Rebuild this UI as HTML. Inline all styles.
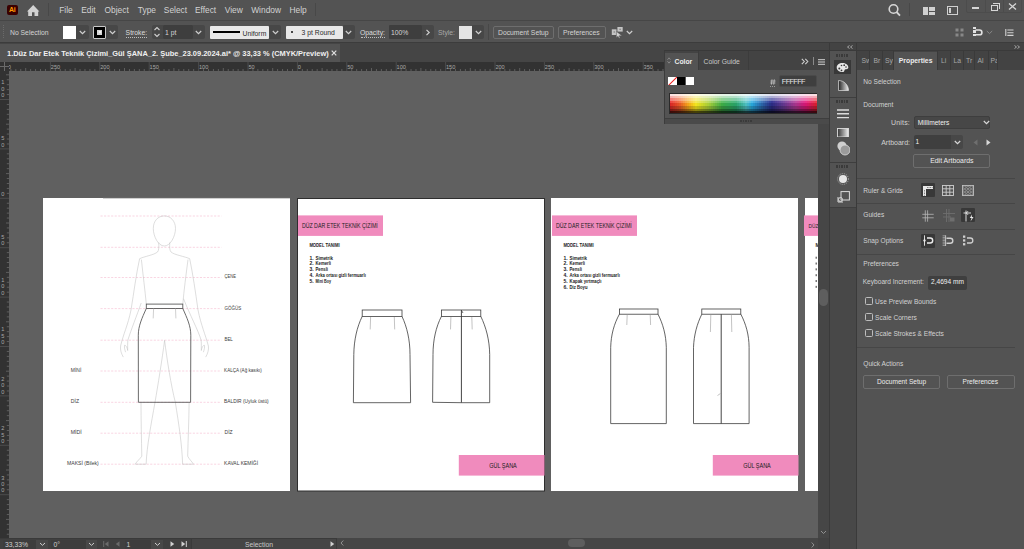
<!DOCTYPE html>
<html><head><meta charset="utf-8">
<style>
*{margin:0;padding:0;box-sizing:border-box}
html,body{width:1024px;height:549px;overflow:hidden;background:#535353;font-family:"Liberation Sans",sans-serif;color:#d6d6d6}
.a{position:absolute}
.t{position:absolute;white-space:pre;line-height:1}
#menubar{left:0;top:0;width:1024px;height:21px;background:#535353;border-bottom:1px solid #464646}
#ctrl{left:0;top:21px;width:1024px;height:22px;background:#535353;border-bottom:1px solid #3c3c3c}
#tabbar{left:0;top:43px;width:829px;height:19px;background:#454545}
#tab{left:0;top:44px;width:340px;height:18px;background:#535353}
#hruler{left:0;top:62px;width:818px;height:9px;background:#323232}
#vruler{left:0;top:62px;width:9px;height:476px;background:#323232}
#canvas{left:9px;top:71px;width:809px;height:467px;background:#606060;overflow:hidden}
.ab{position:absolute;top:127px;height:293px;background:#fff}
.pink{position:absolute;background:#f08bbd}
#vscroll{left:818px;top:71px;width:11px;height:467px;background:#464646}
#status{left:0;top:538px;width:818px;height:11px;background:#404040}
#iconcol{left:829px;top:43px;width:28px;height:506px;background:#484848}
#props{left:857px;top:43px;width:167px;height:506px;background:#535353}
.btn{position:absolute;border:1px solid #6e6e6e;border-radius:2px;background:#535353}
.inp{position:absolute;background:#3f3f3f;border-radius:1px}
.mi{top:5.7px;font-size:8.4px;color:#d2d2d2;margin-left:-0.8px}
.ct{font-size:6.8px;color:#d4d4d4}
.pt{font-size:6.8px}
.pp{font-size:6.6px;color:#d2d2d2}
.ptab{top:51px;width:1px;height:19px;background:#3a3a3a}
.pdiv{left:857px;width:158px;height:1px;background:#464646}
.cb{left:865.3px;width:8px;height:8px;border:1px solid #bdbdbd;border-radius:1.5px}
.grip{width:13px;height:2.5px;background:repeating-linear-gradient(to right,#3a3a3a 0 1.6px,transparent 1.6px 2.6px)}
.st{font-size:6.8px;color:#d0d0d0}
.dd{position:absolute;background:#474747}
</style></head><body>
<!-- MENU BAR -->
<div id="menubar" class="a"></div>
<div class="a" style="left:7px;top:5px;width:11px;height:10px;background:#3a0000;border-radius:2px"></div>
<div class="t" style="left:9px;top:6px;font-size:7px;font-weight:bold;color:#ff9a00;letter-spacing:-0.3px">Ai</div>
<svg class="a" style="left:27px;top:5px" width="13" height="11" viewBox="0 0 13 11"><path d="M6.2 0 L12.4 6.5 L11.2 6.5 L11.2 11 L7.5 11 L7.5 7.2 L5 7.2 L5 11 L1.2 11 L1.2 6.5 L0 6.5 Z" fill="#d2d2d2"/></svg>
<div class="a" style="left:48px;top:3px;width:1px;height:13px;background:#484848"></div>
<div class="t mi" style="left:60px">File</div>
<div class="t mi" style="left:82px">Edit</div>
<div class="t mi" style="left:105.3px">Object</div>
<div class="t mi" style="left:138.6px">Type</div>
<div class="t mi" style="left:164.6px">Select</div>
<div class="t mi" style="left:195.7px">Effect</div>
<div class="t mi" style="left:225.5px">View</div>
<div class="t mi" style="left:252px">Window</div>
<div class="t mi" style="left:290.3px">Help</div>
<div class="a" style="left:315px;top:3px;width:1px;height:13px;background:#484848"></div>
<svg class="a" style="left:887px;top:3px" width="16" height="15" viewBox="0 0 16 15"><circle cx="6.5" cy="6" r="4.3" fill="none" stroke="#d6d6d6" stroke-width="1.6"/><path d="M9.5 9 L13 12.6" stroke="#d6d6d6" stroke-width="1.8"/></svg>
<div class="a" style="left:909px;top:3px;width:1px;height:13px;background:#484848"></div>
<div class="a" style="left:923px;top:7px;width:5px;height:8px;background:#d0d0d0"></div>
<div class="a" style="left:929px;top:7px;width:6px;height:3.5px;background:#d0d0d0"></div>
<div class="a" style="left:929px;top:11.5px;width:6px;height:3.5px;background:#d0d0d0"></div>
<div class="a" style="left:947px;top:6px;width:11px;height:9px;border:1.3px solid #d0d0d0"></div>
<div class="a" style="left:949px;top:8px;width:2px;height:5px;background:#d0d0d0"></div>
<div class="a" style="left:966px;top:-1px;width:56px;height:14px;border:1px solid #4c4c4c;border-radius:0 0 2px 2px"></div>
<div class="a" style="left:985px;top:0px;width:1px;height:13px;background:#4c4c4c"></div>
<div class="a" style="left:1003px;top:0px;width:1px;height:13px;background:#4c4c4c"></div>
<div class="a" style="left:972px;top:7px;width:7px;height:1.5px;background:#d6d6d6"></div>
<div class="a" style="left:991px;top:5px;width:7px;height:6px;border:1.2px solid #d6d6d6"></div>
<div class="a" style="left:993px;top:3px;width:6.5px;height:5.5px;border-top:1.2px solid #d6d6d6;border-right:1.2px solid #d6d6d6"></div>
<svg class="a" style="left:1008px;top:3px" width="9" height="7" viewBox="0 0 9 7"><path d="M1 0.5 L8 6.5 M8 0.5 L1 6.5" stroke="#d6d6d6" stroke-width="1.3"/></svg>
<!-- CONTROL BAR -->
<div id="ctrl" class="a"></div>
<div class="a" style="left:3px;top:25px;width:1px;height:13px;border-left:1px dotted #6a6a6a"></div>
<div class="t ct" style="left:10px;top:29.6px">No Selection</div>
<div class="a" style="left:63px;top:26px;width:13px;height:12.5px;background:#fff"></div>
<div class="dd" style="left:76px;top:25px;width:12.5px;height:14px;border-radius:0 2px 2px 0"></div>
<svg class="a" style="left:78.8px;top:30px" width="7" height="5" viewBox="0 0 7 5"><path d="M0.8 1 L3.5 3.6 L6.2 1" fill="none" stroke="#cfcfcf" stroke-width="1.2"/></svg>
<div class="a" style="left:93px;top:26px;width:13px;height:12.5px;background:#000;border:1px solid #c8c8c8;border-radius:1px"></div>
<div class="a" style="left:96.8px;top:29.5px;width:5.5px;height:5.5px;background:#d8d8d8"></div>
<div class="a" style="left:98.5px;top:31.2px;width:2px;height:2px;background:#fff;border-radius:1px"></div>
<div class="dd" style="left:106px;top:25px;width:11.5px;height:14px;border-radius:0 2px 2px 0"></div>
<svg class="a" style="left:108.5px;top:30px" width="7" height="5" viewBox="0 0 7 5"><path d="M0.8 1 L3.5 3.6 L6.2 1" fill="none" stroke="#cfcfcf" stroke-width="1.2"/></svg>
<div class="t ct" style="left:125.6px;top:29.6px;color:#dcdcdc">Stroke:</div>
<div class="a" style="left:126px;top:37px;width:21px;height:1px;border-top:1px dotted #bdbdbd"></div>
<div class="dd" style="left:151.5px;top:25px;width:11px;height:14px;border-radius:2px 0 0 2px"></div>
<svg class="a" style="left:153px;top:26px" width="8" height="12" viewBox="0 0 8 12"><path d="M1.5 4 L4 1.5 L6.5 4 M1.5 8 L4 10.5 L6.5 8" fill="none" stroke="#d0d0d0" stroke-width="1.1"/></svg>
<div class="inp" style="left:162.5px;top:25px;width:30px;height:14px;background:#3e3e3e"></div>
<div class="t ct" style="left:165px;top:29.6px">1 pt</div>
<div class="dd" style="left:192.5px;top:25px;width:12px;height:14px;border-radius:0 2px 2px 0"></div>
<svg class="a" style="left:195px;top:30px" width="7" height="5" viewBox="0 0 7 5"><path d="M0.8 1 L3.5 3.6 L6.2 1" fill="none" stroke="#cfcfcf" stroke-width="1.2"/></svg>
<div class="a" style="left:209.5px;top:25.5px;width:59.5px;height:13px;background:#e8e8e8;border-radius:1px"></div>
<div class="a" style="left:213px;top:31px;width:27px;height:2px;background:#000"></div>
<div class="t ct" style="left:242.5px;top:30.5px;color:#2a2a2a">Uniform</div>
<div class="dd" style="left:269px;top:25px;width:11.5px;height:14px;border-radius:0 2px 2px 0"></div>
<svg class="a" style="left:271.5px;top:30px" width="7" height="5" viewBox="0 0 7 5"><path d="M0.8 1 L3.5 3.6 L6.2 1" fill="none" stroke="#cfcfcf" stroke-width="1.2"/></svg>
<div class="a" style="left:285.5px;top:25.5px;width:57px;height:13px;background:#e8e8e8;border-radius:1px"></div>
<div class="a" style="left:291px;top:31px;width:2px;height:2px;background:#111;border-radius:1px"></div>
<div class="t ct" style="left:301.5px;top:29.6px;color:#2a2a2a">3 pt Round</div>
<div class="dd" style="left:342.5px;top:25px;width:12px;height:14px;border-radius:0 2px 2px 0"></div>
<svg class="a" style="left:345px;top:30px" width="7" height="5" viewBox="0 0 7 5"><path d="M0.8 1 L3.5 3.6 L6.2 1" fill="none" stroke="#cfcfcf" stroke-width="1.2"/></svg>
<div class="t ct" style="left:360px;top:29.6px;color:#dcdcdc">Opacity:</div>
<div class="a" style="left:360.5px;top:37px;width:24px;height:1px;border-top:1px dotted #bdbdbd"></div>
<div class="inp" style="left:388.5px;top:25px;width:33.5px;height:14px;background:#3e3e3e"></div>
<div class="t ct" style="left:391px;top:29.6px">100%</div>
<div class="dd" style="left:422px;top:25px;width:12px;height:14px;border-radius:0 2px 2px 0"></div>
<svg class="a" style="left:425px;top:29px" width="6" height="7" viewBox="0 0 6 7"><path d="M1.5 0.8 L4.2 3.5 L1.5 6.2" fill="none" stroke="#cfcfcf" stroke-width="1.2"/></svg>
<div class="t ct" style="left:438px;top:29.6px;color:#a8a8a8">Style:</div>
<div class="a" style="left:458.8px;top:26px;width:13px;height:12.5px;background:#e4e4e4"></div>
<div class="dd" style="left:472px;top:25px;width:12px;height:14px;border-radius:0 2px 2px 0"></div>
<svg class="a" style="left:474.5px;top:30px" width="7" height="5" viewBox="0 0 7 5"><path d="M0.8 1 L3.5 3.6 L6.2 1" fill="none" stroke="#cfcfcf" stroke-width="1.2"/></svg>
<div class="a" style="left:487.5px;top:24px;width:1px;height:16px;background:#484848"></div>
<div class="btn" style="left:492.5px;top:25.5px;width:61.5px;height:13px"></div>
<div class="t ct" style="left:498px;top:29.6px">Document Setup</div>
<div class="btn" style="left:557.5px;top:25.5px;width:48px;height:13px"></div>
<div class="t ct" style="left:563px;top:29.6px">Preferences</div>
<svg class="a" style="left:611px;top:26px" width="13" height="13" viewBox="0 0 13 13"><rect x="0.8" y="3.3" width="4.7" height="5.7" fill="#c4c4c4"/><rect x="2.6" y="5.4" width="1.2" height="1.2" fill="#707070"/><rect x="6.4" y="1" width="5.3" height="4.6" fill="#c4c4c4"/><rect x="8.5" y="2.7" width="1.2" height="1.2" fill="#707070"/><path d="M5.4 5.4 L5.4 11.6 L7 10.2 L8.2 12.2 L9 11.8 L8 9.8 L10.9 9.7 Z" fill="#d0d0d0" stroke="#535353" stroke-width="0.4"/></svg>
<svg class="a" style="left:626px;top:30px" width="7" height="5" viewBox="0 0 7 5"><path d="M0.8 1 L3.5 3.6 L6.2 1" fill="none" stroke="#cfcfcf" stroke-width="1.2"/></svg>
<svg class="a" style="left:955px;top:27.5px" width="9" height="9" viewBox="0 0 9 9"><rect x="0.5" y="0.5" width="3" height="3" fill="#888"/><rect x="5.5" y="0.5" width="3" height="3" fill="#888"/><rect x="0.5" y="5.5" width="3" height="3" fill="#888"/><rect x="5.5" y="5.5" width="3" height="3" fill="#888"/></svg>
<div class="a" style="left:972.5px;top:27.2px;width:3px;height:10px;background:repeating-linear-gradient(#e0e0e0 0 2.2px,transparent 2.2px 3.4px)"></div>
<svg class="a" style="left:975px;top:28.5px" width="8" height="7" viewBox="0 0 8 7"><path d="M0.5 1 L4.5 1 A2.4 2.4 0 0 1 4.5 5.8 L0.5 5.8" fill="none" stroke="#e0e0e0" stroke-width="1.6"/></svg>
<svg class="a" style="left:985.5px;top:30px" width="7" height="5" viewBox="0 0 7 5"><path d="M0.8 1 L3.5 3.6 L6.2 1" fill="none" stroke="#8a8a8a" stroke-width="1"/></svg>
<svg class="a" style="left:1004.5px;top:28.5px" width="9" height="7.5" viewBox="0 0 9 7.5"><path d="M0.8 0 L0.8 7.5 M2.3 1 L8.5 1 M2.3 3.7 L8.5 3.7 M2.3 6.4 L8.5 6.4" stroke="#d4d4d4" stroke-width="1.1"/></svg>
<!-- TAB BAR -->
<div id="tabbar" class="a"></div>
<div id="tab" class="a"></div>
<div class="t" style="left:7px;top:49.9px;font-size:7.44px;font-weight:bold;color:#f0f0f0">1.Düz Dar Etek Teknik Çizimi_Gül ŞANA_2. Şube_23.09.2024.ai* @ 33,33 % (CMYK/Preview)</div>
<svg class="a" style="left:330.5px;top:50px" width="6" height="6" viewBox="0 0 6 6"><path d="M0.7 0.7 L5.3 5.3 M5.3 0.7 L0.7 5.3" stroke="#e0e0e0" stroke-width="1.2"/></svg>

<!-- RULERS -->
<div id="hruler" class="a"></div>
<div id="vruler" class="a"></div>
<svg class="a" style="left:9px;top:62px" width="809" height="9" viewBox="0 0 809 9"><g font-family="Liberation Sans" font-size="5.6" fill="#a8a8a8"><text x="-7.60" y="6.9">300</text><text x="41.80" y="6.9">250</text><text x="91.20" y="6.9">200</text><text x="140.60" y="6.9">150</text><text x="190.00" y="6.9">100</text><text x="239.40" y="6.9">50</text><text x="288.80" y="6.9">0</text><text x="338.20" y="6.9">50</text><text x="387.60" y="6.9">100</text><text x="437.00" y="6.9">150</text><text x="486.40" y="6.9">200</text><text x="535.80" y="6.9">250</text><text x="585.20" y="6.9">300</text><text x="634.60" y="6.9">350</text><text x="684.00" y="6.9">400</text><text x="733.40" y="6.9">450</text><text x="782.80" y="6.9">500</text></g><line x1="1.88" y1="7" x2="1.88" y2="9" stroke="#6a6a6a" stroke-width="0.8"/><line x1="6.82" y1="7" x2="6.82" y2="9" stroke="#6a6a6a" stroke-width="0.8"/><line x1="11.76" y1="7" x2="11.76" y2="9" stroke="#6a6a6a" stroke-width="0.8"/><line x1="16.70" y1="6" x2="16.70" y2="9" stroke="#6a6a6a" stroke-width="0.8"/><line x1="21.64" y1="7" x2="21.64" y2="9" stroke="#6a6a6a" stroke-width="0.8"/><line x1="26.58" y1="7" x2="26.58" y2="9" stroke="#6a6a6a" stroke-width="0.8"/><line x1="31.52" y1="7" x2="31.52" y2="9" stroke="#6a6a6a" stroke-width="0.8"/><line x1="36.46" y1="7" x2="36.46" y2="9" stroke="#6a6a6a" stroke-width="0.8"/><line x1="41.40" y1="0" x2="41.40" y2="9" stroke="#4c4c4c" stroke-width="1"/><line x1="46.34" y1="7" x2="46.34" y2="9" stroke="#6a6a6a" stroke-width="0.8"/><line x1="51.28" y1="7" x2="51.28" y2="9" stroke="#6a6a6a" stroke-width="0.8"/><line x1="56.22" y1="7" x2="56.22" y2="9" stroke="#6a6a6a" stroke-width="0.8"/><line x1="61.16" y1="7" x2="61.16" y2="9" stroke="#6a6a6a" stroke-width="0.8"/><line x1="66.10" y1="6" x2="66.10" y2="9" stroke="#6a6a6a" stroke-width="0.8"/><line x1="71.04" y1="7" x2="71.04" y2="9" stroke="#6a6a6a" stroke-width="0.8"/><line x1="75.98" y1="7" x2="75.98" y2="9" stroke="#6a6a6a" stroke-width="0.8"/><line x1="80.92" y1="7" x2="80.92" y2="9" stroke="#6a6a6a" stroke-width="0.8"/><line x1="85.86" y1="7" x2="85.86" y2="9" stroke="#6a6a6a" stroke-width="0.8"/><line x1="90.80" y1="0" x2="90.80" y2="9" stroke="#4c4c4c" stroke-width="1"/><line x1="95.74" y1="7" x2="95.74" y2="9" stroke="#6a6a6a" stroke-width="0.8"/><line x1="100.68" y1="7" x2="100.68" y2="9" stroke="#6a6a6a" stroke-width="0.8"/><line x1="105.62" y1="7" x2="105.62" y2="9" stroke="#6a6a6a" stroke-width="0.8"/><line x1="110.56" y1="7" x2="110.56" y2="9" stroke="#6a6a6a" stroke-width="0.8"/><line x1="115.50" y1="6" x2="115.50" y2="9" stroke="#6a6a6a" stroke-width="0.8"/><line x1="120.44" y1="7" x2="120.44" y2="9" stroke="#6a6a6a" stroke-width="0.8"/><line x1="125.38" y1="7" x2="125.38" y2="9" stroke="#6a6a6a" stroke-width="0.8"/><line x1="130.32" y1="7" x2="130.32" y2="9" stroke="#6a6a6a" stroke-width="0.8"/><line x1="135.26" y1="7" x2="135.26" y2="9" stroke="#6a6a6a" stroke-width="0.8"/><line x1="140.20" y1="0" x2="140.20" y2="9" stroke="#4c4c4c" stroke-width="1"/><line x1="145.14" y1="7" x2="145.14" y2="9" stroke="#6a6a6a" stroke-width="0.8"/><line x1="150.08" y1="7" x2="150.08" y2="9" stroke="#6a6a6a" stroke-width="0.8"/><line x1="155.02" y1="7" x2="155.02" y2="9" stroke="#6a6a6a" stroke-width="0.8"/><line x1="159.96" y1="7" x2="159.96" y2="9" stroke="#6a6a6a" stroke-width="0.8"/><line x1="164.90" y1="6" x2="164.90" y2="9" stroke="#6a6a6a" stroke-width="0.8"/><line x1="169.84" y1="7" x2="169.84" y2="9" stroke="#6a6a6a" stroke-width="0.8"/><line x1="174.78" y1="7" x2="174.78" y2="9" stroke="#6a6a6a" stroke-width="0.8"/><line x1="179.72" y1="7" x2="179.72" y2="9" stroke="#6a6a6a" stroke-width="0.8"/><line x1="184.66" y1="7" x2="184.66" y2="9" stroke="#6a6a6a" stroke-width="0.8"/><line x1="189.60" y1="0" x2="189.60" y2="9" stroke="#4c4c4c" stroke-width="1"/><line x1="194.54" y1="7" x2="194.54" y2="9" stroke="#6a6a6a" stroke-width="0.8"/><line x1="199.48" y1="7" x2="199.48" y2="9" stroke="#6a6a6a" stroke-width="0.8"/><line x1="204.42" y1="7" x2="204.42" y2="9" stroke="#6a6a6a" stroke-width="0.8"/><line x1="209.36" y1="7" x2="209.36" y2="9" stroke="#6a6a6a" stroke-width="0.8"/><line x1="214.30" y1="6" x2="214.30" y2="9" stroke="#6a6a6a" stroke-width="0.8"/><line x1="219.24" y1="7" x2="219.24" y2="9" stroke="#6a6a6a" stroke-width="0.8"/><line x1="224.18" y1="7" x2="224.18" y2="9" stroke="#6a6a6a" stroke-width="0.8"/><line x1="229.12" y1="7" x2="229.12" y2="9" stroke="#6a6a6a" stroke-width="0.8"/><line x1="234.06" y1="7" x2="234.06" y2="9" stroke="#6a6a6a" stroke-width="0.8"/><line x1="239.00" y1="0" x2="239.00" y2="9" stroke="#4c4c4c" stroke-width="1"/><line x1="243.94" y1="7" x2="243.94" y2="9" stroke="#6a6a6a" stroke-width="0.8"/><line x1="248.88" y1="7" x2="248.88" y2="9" stroke="#6a6a6a" stroke-width="0.8"/><line x1="253.82" y1="7" x2="253.82" y2="9" stroke="#6a6a6a" stroke-width="0.8"/><line x1="258.76" y1="7" x2="258.76" y2="9" stroke="#6a6a6a" stroke-width="0.8"/><line x1="263.70" y1="6" x2="263.70" y2="9" stroke="#6a6a6a" stroke-width="0.8"/><line x1="268.64" y1="7" x2="268.64" y2="9" stroke="#6a6a6a" stroke-width="0.8"/><line x1="273.58" y1="7" x2="273.58" y2="9" stroke="#6a6a6a" stroke-width="0.8"/><line x1="278.52" y1="7" x2="278.52" y2="9" stroke="#6a6a6a" stroke-width="0.8"/><line x1="283.46" y1="7" x2="283.46" y2="9" stroke="#6a6a6a" stroke-width="0.8"/><line x1="288.40" y1="0" x2="288.40" y2="9" stroke="#4c4c4c" stroke-width="1"/><line x1="293.34" y1="7" x2="293.34" y2="9" stroke="#6a6a6a" stroke-width="0.8"/><line x1="298.28" y1="7" x2="298.28" y2="9" stroke="#6a6a6a" stroke-width="0.8"/><line x1="303.22" y1="7" x2="303.22" y2="9" stroke="#6a6a6a" stroke-width="0.8"/><line x1="308.16" y1="7" x2="308.16" y2="9" stroke="#6a6a6a" stroke-width="0.8"/><line x1="313.10" y1="6" x2="313.10" y2="9" stroke="#6a6a6a" stroke-width="0.8"/><line x1="318.04" y1="7" x2="318.04" y2="9" stroke="#6a6a6a" stroke-width="0.8"/><line x1="322.98" y1="7" x2="322.98" y2="9" stroke="#6a6a6a" stroke-width="0.8"/><line x1="327.92" y1="7" x2="327.92" y2="9" stroke="#6a6a6a" stroke-width="0.8"/><line x1="332.86" y1="7" x2="332.86" y2="9" stroke="#6a6a6a" stroke-width="0.8"/><line x1="337.80" y1="0" x2="337.80" y2="9" stroke="#4c4c4c" stroke-width="1"/><line x1="342.74" y1="7" x2="342.74" y2="9" stroke="#6a6a6a" stroke-width="0.8"/><line x1="347.68" y1="7" x2="347.68" y2="9" stroke="#6a6a6a" stroke-width="0.8"/><line x1="352.62" y1="7" x2="352.62" y2="9" stroke="#6a6a6a" stroke-width="0.8"/><line x1="357.56" y1="7" x2="357.56" y2="9" stroke="#6a6a6a" stroke-width="0.8"/><line x1="362.50" y1="6" x2="362.50" y2="9" stroke="#6a6a6a" stroke-width="0.8"/><line x1="367.44" y1="7" x2="367.44" y2="9" stroke="#6a6a6a" stroke-width="0.8"/><line x1="372.38" y1="7" x2="372.38" y2="9" stroke="#6a6a6a" stroke-width="0.8"/><line x1="377.32" y1="7" x2="377.32" y2="9" stroke="#6a6a6a" stroke-width="0.8"/><line x1="382.26" y1="7" x2="382.26" y2="9" stroke="#6a6a6a" stroke-width="0.8"/><line x1="387.20" y1="0" x2="387.20" y2="9" stroke="#4c4c4c" stroke-width="1"/><line x1="392.14" y1="7" x2="392.14" y2="9" stroke="#6a6a6a" stroke-width="0.8"/><line x1="397.08" y1="7" x2="397.08" y2="9" stroke="#6a6a6a" stroke-width="0.8"/><line x1="402.02" y1="7" x2="402.02" y2="9" stroke="#6a6a6a" stroke-width="0.8"/><line x1="406.96" y1="7" x2="406.96" y2="9" stroke="#6a6a6a" stroke-width="0.8"/><line x1="411.90" y1="6" x2="411.90" y2="9" stroke="#6a6a6a" stroke-width="0.8"/><line x1="416.84" y1="7" x2="416.84" y2="9" stroke="#6a6a6a" stroke-width="0.8"/><line x1="421.78" y1="7" x2="421.78" y2="9" stroke="#6a6a6a" stroke-width="0.8"/><line x1="426.72" y1="7" x2="426.72" y2="9" stroke="#6a6a6a" stroke-width="0.8"/><line x1="431.66" y1="7" x2="431.66" y2="9" stroke="#6a6a6a" stroke-width="0.8"/><line x1="436.60" y1="0" x2="436.60" y2="9" stroke="#4c4c4c" stroke-width="1"/><line x1="441.54" y1="7" x2="441.54" y2="9" stroke="#6a6a6a" stroke-width="0.8"/><line x1="446.48" y1="7" x2="446.48" y2="9" stroke="#6a6a6a" stroke-width="0.8"/><line x1="451.42" y1="7" x2="451.42" y2="9" stroke="#6a6a6a" stroke-width="0.8"/><line x1="456.36" y1="7" x2="456.36" y2="9" stroke="#6a6a6a" stroke-width="0.8"/><line x1="461.30" y1="6" x2="461.30" y2="9" stroke="#6a6a6a" stroke-width="0.8"/><line x1="466.24" y1="7" x2="466.24" y2="9" stroke="#6a6a6a" stroke-width="0.8"/><line x1="471.18" y1="7" x2="471.18" y2="9" stroke="#6a6a6a" stroke-width="0.8"/><line x1="476.12" y1="7" x2="476.12" y2="9" stroke="#6a6a6a" stroke-width="0.8"/><line x1="481.06" y1="7" x2="481.06" y2="9" stroke="#6a6a6a" stroke-width="0.8"/><line x1="486.00" y1="0" x2="486.00" y2="9" stroke="#4c4c4c" stroke-width="1"/><line x1="490.94" y1="7" x2="490.94" y2="9" stroke="#6a6a6a" stroke-width="0.8"/><line x1="495.88" y1="7" x2="495.88" y2="9" stroke="#6a6a6a" stroke-width="0.8"/><line x1="500.82" y1="7" x2="500.82" y2="9" stroke="#6a6a6a" stroke-width="0.8"/><line x1="505.76" y1="7" x2="505.76" y2="9" stroke="#6a6a6a" stroke-width="0.8"/><line x1="510.70" y1="6" x2="510.70" y2="9" stroke="#6a6a6a" stroke-width="0.8"/><line x1="515.64" y1="7" x2="515.64" y2="9" stroke="#6a6a6a" stroke-width="0.8"/><line x1="520.58" y1="7" x2="520.58" y2="9" stroke="#6a6a6a" stroke-width="0.8"/><line x1="525.52" y1="7" x2="525.52" y2="9" stroke="#6a6a6a" stroke-width="0.8"/><line x1="530.46" y1="7" x2="530.46" y2="9" stroke="#6a6a6a" stroke-width="0.8"/><line x1="535.40" y1="0" x2="535.40" y2="9" stroke="#4c4c4c" stroke-width="1"/><line x1="540.34" y1="7" x2="540.34" y2="9" stroke="#6a6a6a" stroke-width="0.8"/><line x1="545.28" y1="7" x2="545.28" y2="9" stroke="#6a6a6a" stroke-width="0.8"/><line x1="550.22" y1="7" x2="550.22" y2="9" stroke="#6a6a6a" stroke-width="0.8"/><line x1="555.16" y1="7" x2="555.16" y2="9" stroke="#6a6a6a" stroke-width="0.8"/><line x1="560.10" y1="6" x2="560.10" y2="9" stroke="#6a6a6a" stroke-width="0.8"/><line x1="565.04" y1="7" x2="565.04" y2="9" stroke="#6a6a6a" stroke-width="0.8"/><line x1="569.98" y1="7" x2="569.98" y2="9" stroke="#6a6a6a" stroke-width="0.8"/><line x1="574.92" y1="7" x2="574.92" y2="9" stroke="#6a6a6a" stroke-width="0.8"/><line x1="579.86" y1="7" x2="579.86" y2="9" stroke="#6a6a6a" stroke-width="0.8"/><line x1="584.80" y1="0" x2="584.80" y2="9" stroke="#4c4c4c" stroke-width="1"/><line x1="589.74" y1="7" x2="589.74" y2="9" stroke="#6a6a6a" stroke-width="0.8"/><line x1="594.68" y1="7" x2="594.68" y2="9" stroke="#6a6a6a" stroke-width="0.8"/><line x1="599.62" y1="7" x2="599.62" y2="9" stroke="#6a6a6a" stroke-width="0.8"/><line x1="604.56" y1="7" x2="604.56" y2="9" stroke="#6a6a6a" stroke-width="0.8"/><line x1="609.50" y1="6" x2="609.50" y2="9" stroke="#6a6a6a" stroke-width="0.8"/><line x1="614.44" y1="7" x2="614.44" y2="9" stroke="#6a6a6a" stroke-width="0.8"/><line x1="619.38" y1="7" x2="619.38" y2="9" stroke="#6a6a6a" stroke-width="0.8"/><line x1="624.32" y1="7" x2="624.32" y2="9" stroke="#6a6a6a" stroke-width="0.8"/><line x1="629.26" y1="7" x2="629.26" y2="9" stroke="#6a6a6a" stroke-width="0.8"/><line x1="634.20" y1="0" x2="634.20" y2="9" stroke="#4c4c4c" stroke-width="1"/><line x1="639.14" y1="7" x2="639.14" y2="9" stroke="#6a6a6a" stroke-width="0.8"/><line x1="644.08" y1="7" x2="644.08" y2="9" stroke="#6a6a6a" stroke-width="0.8"/><line x1="649.02" y1="7" x2="649.02" y2="9" stroke="#6a6a6a" stroke-width="0.8"/><line x1="653.96" y1="7" x2="653.96" y2="9" stroke="#6a6a6a" stroke-width="0.8"/><line x1="658.90" y1="6" x2="658.90" y2="9" stroke="#6a6a6a" stroke-width="0.8"/><line x1="663.84" y1="7" x2="663.84" y2="9" stroke="#6a6a6a" stroke-width="0.8"/><line x1="668.78" y1="7" x2="668.78" y2="9" stroke="#6a6a6a" stroke-width="0.8"/><line x1="673.72" y1="7" x2="673.72" y2="9" stroke="#6a6a6a" stroke-width="0.8"/><line x1="678.66" y1="7" x2="678.66" y2="9" stroke="#6a6a6a" stroke-width="0.8"/><line x1="683.60" y1="0" x2="683.60" y2="9" stroke="#4c4c4c" stroke-width="1"/><line x1="688.54" y1="7" x2="688.54" y2="9" stroke="#6a6a6a" stroke-width="0.8"/><line x1="693.48" y1="7" x2="693.48" y2="9" stroke="#6a6a6a" stroke-width="0.8"/><line x1="698.42" y1="7" x2="698.42" y2="9" stroke="#6a6a6a" stroke-width="0.8"/><line x1="703.36" y1="7" x2="703.36" y2="9" stroke="#6a6a6a" stroke-width="0.8"/><line x1="708.30" y1="6" x2="708.30" y2="9" stroke="#6a6a6a" stroke-width="0.8"/><line x1="713.24" y1="7" x2="713.24" y2="9" stroke="#6a6a6a" stroke-width="0.8"/><line x1="718.18" y1="7" x2="718.18" y2="9" stroke="#6a6a6a" stroke-width="0.8"/><line x1="723.12" y1="7" x2="723.12" y2="9" stroke="#6a6a6a" stroke-width="0.8"/><line x1="728.06" y1="7" x2="728.06" y2="9" stroke="#6a6a6a" stroke-width="0.8"/><line x1="733.00" y1="0" x2="733.00" y2="9" stroke="#4c4c4c" stroke-width="1"/><line x1="737.94" y1="7" x2="737.94" y2="9" stroke="#6a6a6a" stroke-width="0.8"/><line x1="742.88" y1="7" x2="742.88" y2="9" stroke="#6a6a6a" stroke-width="0.8"/><line x1="747.82" y1="7" x2="747.82" y2="9" stroke="#6a6a6a" stroke-width="0.8"/><line x1="752.76" y1="7" x2="752.76" y2="9" stroke="#6a6a6a" stroke-width="0.8"/><line x1="757.70" y1="6" x2="757.70" y2="9" stroke="#6a6a6a" stroke-width="0.8"/><line x1="762.64" y1="7" x2="762.64" y2="9" stroke="#6a6a6a" stroke-width="0.8"/><line x1="767.58" y1="7" x2="767.58" y2="9" stroke="#6a6a6a" stroke-width="0.8"/><line x1="772.52" y1="7" x2="772.52" y2="9" stroke="#6a6a6a" stroke-width="0.8"/><line x1="777.46" y1="7" x2="777.46" y2="9" stroke="#6a6a6a" stroke-width="0.8"/><line x1="782.40" y1="0" x2="782.40" y2="9" stroke="#4c4c4c" stroke-width="1"/><line x1="787.34" y1="7" x2="787.34" y2="9" stroke="#6a6a6a" stroke-width="0.8"/><line x1="792.28" y1="7" x2="792.28" y2="9" stroke="#6a6a6a" stroke-width="0.8"/><line x1="797.22" y1="7" x2="797.22" y2="9" stroke="#6a6a6a" stroke-width="0.8"/><line x1="802.16" y1="7" x2="802.16" y2="9" stroke="#6a6a6a" stroke-width="0.8"/><line x1="807.10" y1="6" x2="807.10" y2="9" stroke="#6a6a6a" stroke-width="0.8"/></svg>
<svg class="a" style="left:0px;top:71px" width="9" height="467" viewBox="0 0 9 467"><g font-family="Liberation Sans" font-size="5.6" fill="#a8a8a8"><text x="1.2" y="26.20">0</text><text x="1.2" y="19.80">0</text><text x="1.2" y="13.40">1</text><text x="1.2" y="75.60">0</text><text x="1.2" y="69.20">5</text><text x="1.2" y="125.00">0</text><text x="1.2" y="174.40">0</text><text x="1.2" y="168.00">5</text><text x="1.2" y="223.80">0</text><text x="1.2" y="217.40">0</text><text x="1.2" y="211.00">1</text><text x="1.2" y="273.20">0</text><text x="1.2" y="266.80">5</text><text x="1.2" y="260.40">1</text><text x="1.2" y="322.60">0</text><text x="1.2" y="316.20">0</text><text x="1.2" y="309.80">2</text><text x="1.2" y="372.00">0</text><text x="1.2" y="365.60">5</text><text x="1.2" y="359.20">2</text><text x="1.2" y="421.40">0</text><text x="1.2" y="415.00">0</text><text x="1.2" y="408.60">3</text></g><line x1="6" y1="3.80" x2="9" y2="3.80" stroke="#6a6a6a" stroke-width="0.8"/><line x1="6.8" y1="8.74" x2="9" y2="8.74" stroke="#6a6a6a" stroke-width="0.8"/><line x1="6.8" y1="13.68" x2="9" y2="13.68" stroke="#6a6a6a" stroke-width="0.8"/><line x1="6.8" y1="18.62" x2="9" y2="18.62" stroke="#6a6a6a" stroke-width="0.8"/><line x1="6.8" y1="23.56" x2="9" y2="23.56" stroke="#6a6a6a" stroke-width="0.8"/><line x1="0" y1="28.50" x2="9" y2="28.50" stroke="#4c4c4c" stroke-width="1"/><line x1="6.8" y1="33.44" x2="9" y2="33.44" stroke="#6a6a6a" stroke-width="0.8"/><line x1="6.8" y1="38.38" x2="9" y2="38.38" stroke="#6a6a6a" stroke-width="0.8"/><line x1="6.8" y1="43.32" x2="9" y2="43.32" stroke="#6a6a6a" stroke-width="0.8"/><line x1="6.8" y1="48.26" x2="9" y2="48.26" stroke="#6a6a6a" stroke-width="0.8"/><line x1="6" y1="53.20" x2="9" y2="53.20" stroke="#6a6a6a" stroke-width="0.8"/><line x1="6.8" y1="58.14" x2="9" y2="58.14" stroke="#6a6a6a" stroke-width="0.8"/><line x1="6.8" y1="63.08" x2="9" y2="63.08" stroke="#6a6a6a" stroke-width="0.8"/><line x1="6.8" y1="68.02" x2="9" y2="68.02" stroke="#6a6a6a" stroke-width="0.8"/><line x1="6.8" y1="72.96" x2="9" y2="72.96" stroke="#6a6a6a" stroke-width="0.8"/><line x1="0" y1="77.90" x2="9" y2="77.90" stroke="#4c4c4c" stroke-width="1"/><line x1="6.8" y1="82.84" x2="9" y2="82.84" stroke="#6a6a6a" stroke-width="0.8"/><line x1="6.8" y1="87.78" x2="9" y2="87.78" stroke="#6a6a6a" stroke-width="0.8"/><line x1="6.8" y1="92.72" x2="9" y2="92.72" stroke="#6a6a6a" stroke-width="0.8"/><line x1="6.8" y1="97.66" x2="9" y2="97.66" stroke="#6a6a6a" stroke-width="0.8"/><line x1="6" y1="102.60" x2="9" y2="102.60" stroke="#6a6a6a" stroke-width="0.8"/><line x1="6.8" y1="107.54" x2="9" y2="107.54" stroke="#6a6a6a" stroke-width="0.8"/><line x1="6.8" y1="112.48" x2="9" y2="112.48" stroke="#6a6a6a" stroke-width="0.8"/><line x1="6.8" y1="117.42" x2="9" y2="117.42" stroke="#6a6a6a" stroke-width="0.8"/><line x1="6.8" y1="122.36" x2="9" y2="122.36" stroke="#6a6a6a" stroke-width="0.8"/><line x1="0" y1="127.30" x2="9" y2="127.30" stroke="#4c4c4c" stroke-width="1"/><line x1="6.8" y1="132.24" x2="9" y2="132.24" stroke="#6a6a6a" stroke-width="0.8"/><line x1="6.8" y1="137.18" x2="9" y2="137.18" stroke="#6a6a6a" stroke-width="0.8"/><line x1="6.8" y1="142.12" x2="9" y2="142.12" stroke="#6a6a6a" stroke-width="0.8"/><line x1="6.8" y1="147.06" x2="9" y2="147.06" stroke="#6a6a6a" stroke-width="0.8"/><line x1="6" y1="152.00" x2="9" y2="152.00" stroke="#6a6a6a" stroke-width="0.8"/><line x1="6.8" y1="156.94" x2="9" y2="156.94" stroke="#6a6a6a" stroke-width="0.8"/><line x1="6.8" y1="161.88" x2="9" y2="161.88" stroke="#6a6a6a" stroke-width="0.8"/><line x1="6.8" y1="166.82" x2="9" y2="166.82" stroke="#6a6a6a" stroke-width="0.8"/><line x1="6.8" y1="171.76" x2="9" y2="171.76" stroke="#6a6a6a" stroke-width="0.8"/><line x1="0" y1="176.70" x2="9" y2="176.70" stroke="#4c4c4c" stroke-width="1"/><line x1="6.8" y1="181.64" x2="9" y2="181.64" stroke="#6a6a6a" stroke-width="0.8"/><line x1="6.8" y1="186.58" x2="9" y2="186.58" stroke="#6a6a6a" stroke-width="0.8"/><line x1="6.8" y1="191.52" x2="9" y2="191.52" stroke="#6a6a6a" stroke-width="0.8"/><line x1="6.8" y1="196.46" x2="9" y2="196.46" stroke="#6a6a6a" stroke-width="0.8"/><line x1="6" y1="201.40" x2="9" y2="201.40" stroke="#6a6a6a" stroke-width="0.8"/><line x1="6.8" y1="206.34" x2="9" y2="206.34" stroke="#6a6a6a" stroke-width="0.8"/><line x1="6.8" y1="211.28" x2="9" y2="211.28" stroke="#6a6a6a" stroke-width="0.8"/><line x1="6.8" y1="216.22" x2="9" y2="216.22" stroke="#6a6a6a" stroke-width="0.8"/><line x1="6.8" y1="221.16" x2="9" y2="221.16" stroke="#6a6a6a" stroke-width="0.8"/><line x1="0" y1="226.10" x2="9" y2="226.10" stroke="#4c4c4c" stroke-width="1"/><line x1="6.8" y1="231.04" x2="9" y2="231.04" stroke="#6a6a6a" stroke-width="0.8"/><line x1="6.8" y1="235.98" x2="9" y2="235.98" stroke="#6a6a6a" stroke-width="0.8"/><line x1="6.8" y1="240.92" x2="9" y2="240.92" stroke="#6a6a6a" stroke-width="0.8"/><line x1="6.8" y1="245.86" x2="9" y2="245.86" stroke="#6a6a6a" stroke-width="0.8"/><line x1="6" y1="250.80" x2="9" y2="250.80" stroke="#6a6a6a" stroke-width="0.8"/><line x1="6.8" y1="255.74" x2="9" y2="255.74" stroke="#6a6a6a" stroke-width="0.8"/><line x1="6.8" y1="260.68" x2="9" y2="260.68" stroke="#6a6a6a" stroke-width="0.8"/><line x1="6.8" y1="265.62" x2="9" y2="265.62" stroke="#6a6a6a" stroke-width="0.8"/><line x1="6.8" y1="270.56" x2="9" y2="270.56" stroke="#6a6a6a" stroke-width="0.8"/><line x1="0" y1="275.50" x2="9" y2="275.50" stroke="#4c4c4c" stroke-width="1"/><line x1="6.8" y1="280.44" x2="9" y2="280.44" stroke="#6a6a6a" stroke-width="0.8"/><line x1="6.8" y1="285.38" x2="9" y2="285.38" stroke="#6a6a6a" stroke-width="0.8"/><line x1="6.8" y1="290.32" x2="9" y2="290.32" stroke="#6a6a6a" stroke-width="0.8"/><line x1="6.8" y1="295.26" x2="9" y2="295.26" stroke="#6a6a6a" stroke-width="0.8"/><line x1="6" y1="300.20" x2="9" y2="300.20" stroke="#6a6a6a" stroke-width="0.8"/><line x1="6.8" y1="305.14" x2="9" y2="305.14" stroke="#6a6a6a" stroke-width="0.8"/><line x1="6.8" y1="310.08" x2="9" y2="310.08" stroke="#6a6a6a" stroke-width="0.8"/><line x1="6.8" y1="315.02" x2="9" y2="315.02" stroke="#6a6a6a" stroke-width="0.8"/><line x1="6.8" y1="319.96" x2="9" y2="319.96" stroke="#6a6a6a" stroke-width="0.8"/><line x1="0" y1="324.90" x2="9" y2="324.90" stroke="#4c4c4c" stroke-width="1"/><line x1="6.8" y1="329.84" x2="9" y2="329.84" stroke="#6a6a6a" stroke-width="0.8"/><line x1="6.8" y1="334.78" x2="9" y2="334.78" stroke="#6a6a6a" stroke-width="0.8"/><line x1="6.8" y1="339.72" x2="9" y2="339.72" stroke="#6a6a6a" stroke-width="0.8"/><line x1="6.8" y1="344.66" x2="9" y2="344.66" stroke="#6a6a6a" stroke-width="0.8"/><line x1="6" y1="349.60" x2="9" y2="349.60" stroke="#6a6a6a" stroke-width="0.8"/><line x1="6.8" y1="354.54" x2="9" y2="354.54" stroke="#6a6a6a" stroke-width="0.8"/><line x1="6.8" y1="359.48" x2="9" y2="359.48" stroke="#6a6a6a" stroke-width="0.8"/><line x1="6.8" y1="364.42" x2="9" y2="364.42" stroke="#6a6a6a" stroke-width="0.8"/><line x1="6.8" y1="369.36" x2="9" y2="369.36" stroke="#6a6a6a" stroke-width="0.8"/><line x1="0" y1="374.30" x2="9" y2="374.30" stroke="#4c4c4c" stroke-width="1"/><line x1="6.8" y1="379.24" x2="9" y2="379.24" stroke="#6a6a6a" stroke-width="0.8"/><line x1="6.8" y1="384.18" x2="9" y2="384.18" stroke="#6a6a6a" stroke-width="0.8"/><line x1="6.8" y1="389.12" x2="9" y2="389.12" stroke="#6a6a6a" stroke-width="0.8"/><line x1="6.8" y1="394.06" x2="9" y2="394.06" stroke="#6a6a6a" stroke-width="0.8"/><line x1="6" y1="399.00" x2="9" y2="399.00" stroke="#6a6a6a" stroke-width="0.8"/><line x1="6.8" y1="403.94" x2="9" y2="403.94" stroke="#6a6a6a" stroke-width="0.8"/><line x1="6.8" y1="408.88" x2="9" y2="408.88" stroke="#6a6a6a" stroke-width="0.8"/><line x1="6.8" y1="413.82" x2="9" y2="413.82" stroke="#6a6a6a" stroke-width="0.8"/><line x1="6.8" y1="418.76" x2="9" y2="418.76" stroke="#6a6a6a" stroke-width="0.8"/><line x1="0" y1="423.70" x2="9" y2="423.70" stroke="#4c4c4c" stroke-width="1"/><line x1="6.8" y1="428.64" x2="9" y2="428.64" stroke="#6a6a6a" stroke-width="0.8"/><line x1="6.8" y1="433.58" x2="9" y2="433.58" stroke="#6a6a6a" stroke-width="0.8"/><line x1="6.8" y1="438.52" x2="9" y2="438.52" stroke="#6a6a6a" stroke-width="0.8"/><line x1="6.8" y1="443.46" x2="9" y2="443.46" stroke="#6a6a6a" stroke-width="0.8"/><line x1="6" y1="448.40" x2="9" y2="448.40" stroke="#6a6a6a" stroke-width="0.8"/><line x1="6.8" y1="453.34" x2="9" y2="453.34" stroke="#6a6a6a" stroke-width="0.8"/><line x1="6.8" y1="458.28" x2="9" y2="458.28" stroke="#6a6a6a" stroke-width="0.8"/><line x1="6.8" y1="463.22" x2="9" y2="463.22" stroke="#6a6a6a" stroke-width="0.8"/></svg>
<svg class="a" style="left:0;top:62px" width="9" height="9" viewBox="0 0 9 9"><path d="M0 4.5 L9 4.5 M4.5 0 L4.5 9" stroke="#6a6a6a" stroke-width="1"/></svg>
<!-- CANVAS -->
<div id="canvas" class="a">
<svg class="a" style="left:0;top:0" width="809" height="467" viewBox="9 71 809 467">
<rect x="43" y="198" width="247" height="293" fill="#fff"/>
<rect x="297.5" y="198.5" width="247" height="292.5" fill="#fff" stroke="#2e2e2e" stroke-width="1"/>
<rect x="551" y="198" width="247" height="293" fill="#fff"/>
<rect x="805" y="198" width="247" height="293" fill="#fff"/>
<line x1="103" y1="198.3" x2="290" y2="198.3" stroke="#9a9a9a" stroke-width="0.6"/>
<g stroke="#f8cadb" stroke-width="0.8" stroke-dasharray="2.1 1.45"><line x1="100.5" y1="216" x2="221.5" y2="216"/><line x1="100.5" y1="247.3" x2="221.5" y2="247.3"/><line x1="100.5" y1="277.5" x2="221.5" y2="277.5"/><line x1="100.5" y1="308.6" x2="221.5" y2="308.6"/><line x1="100.5" y1="340.2" x2="221.5" y2="340.2"/><line x1="100.5" y1="371" x2="221.5" y2="371"/><line x1="100.5" y1="402.3" x2="221.5" y2="402.3"/><line x1="100.5" y1="433.2" x2="221.5" y2="433.2"/><line x1="100.5" y1="464.2" x2="221.5" y2="464.2"/></g>
<g fill="none" stroke="#bcbcbc" stroke-width="0.5">
<path d="M164.3 215.9 C158 215.9 153.3 221 153.3 228.5 C153.3 236 158 246 164.3 246 C170.5 246 175.5 236 175.5 228.5 C175.5 221 170.5 215.9 164.3 215.9 Z"/>
<path d="M158.7 242.3 C159 247 159 250 157.5 252 C154 255 144 256.5 139.6 258.7 C136 275 134 292 131 310 C128 325 123 335 120.6 346 C120 350 121.5 354 123.3 357.1"/>
<path d="M169.8 242.3 C169.5 247 169.5 250 171 252 C174.5 255 185 256.5 189.7 258.7 C193 275 195.5 292 198 310 C201 325 205.5 335 208.4 346 C209 350 207.5 354 205.7 357.1"/>
<path d="M141.4 259.6 C143 275 145 290 146.3 304.1"/>
<path d="M188 259.6 C186 275 184 290 182.8 304.1"/>
<path d="M141.2 303 C137 315 131 330 127.9 340 C127.5 344 127.7 348 127.7 350.5 M127.7 350.5 C127.3 347.5 125.5 344.8 124.6 345.2 C124 347.5 125 350 125.6 352.2"/>
<path d="M183.5 298.7 C190 315 198 330 201.1 340 C201.5 344 201.3 348 201.3 350.5 M201.3 350.5 C201.7 347.5 203.5 344.8 204.4 345.2 C205 347.5 204 350 203.4 352.2"/>
<path d="M164.6 340.3 C162 360 158 385 155 402.3 C151 425 147 445 146.1 464.2 L135.2 464.2 C137 461 140 459 141.8 456.2 C141.5 440 141 420 141 402.3"/>
<path d="M164.6 340.3 C167 360 171 385 175.3 402.3 C179 425 182 445 182.6 464.2 L193.5 464.2 C191.5 461 189 459 187.7 456.2 C188 440 189 420 189.1 402.3"/>
</g>
<g fill="none" stroke="#5a5a5a" stroke-width="0.9">
<rect x="146.3" y="304.1" width="36.5" height="4.4"/>
<path d="M146.3 308.5 C142 318 138.3 326 138.3 335.2 L138.4 402.3 L190.6 402.3 L190.8 335.2 C190.8 326 187 318 182.8 308.5"/>
</g>
<g stroke="#b0b0b0" stroke-width="0.6"><line x1="153.6" y1="308.5" x2="153.2" y2="318.4"/><line x1="175.5" y1="308.5" x2="175.9" y2="318.4"/></g>
<g font-family="Liberation Sans"><text x="224.6" y="278.35" font-size="4.8" font-weight="normal" fill="#3a3a3a" textLength="11.3" lengthAdjust="spacingAndGlyphs">ÇENE</text><text x="224.6" y="309.75" font-size="4.8" font-weight="normal" fill="#3a3a3a" textLength="16.7" lengthAdjust="spacingAndGlyphs">GÖĞÜS</text><text x="224.6" y="340.75" font-size="4.8" font-weight="normal" fill="#3a3a3a" textLength="8.2" lengthAdjust="spacingAndGlyphs">BEL</text><text x="224.1" y="372.25" font-size="4.8" font-weight="normal" fill="#3a3a3a" textLength="37.8" lengthAdjust="spacingAndGlyphs">KALÇA (Ağ kasıkı)</text><text x="224.1" y="403.15" font-size="4.8" font-weight="normal" fill="#3a3a3a" textLength="44.6" lengthAdjust="spacingAndGlyphs">BALDIR (Uyluk üstü)</text><text x="224.6" y="433.75" font-size="4.8" font-weight="normal" fill="#3a3a3a" textLength="8.0" lengthAdjust="spacingAndGlyphs">DİZ</text><text x="224.1" y="465.25" font-size="4.8" font-weight="normal" fill="#3a3a3a" textLength="34.0" lengthAdjust="spacingAndGlyphs">KAVAL KEMİĞİ</text><text x="70.8" y="372.05" font-size="4.8" font-weight="normal" fill="#3a3a3a" textLength="10.5" lengthAdjust="spacingAndGlyphs">MİNİ</text><text x="70.8" y="402.75" font-size="4.8" font-weight="normal" fill="#3a3a3a" textLength="8.2" lengthAdjust="spacingAndGlyphs">DİZ</text><text x="70.8" y="433.75" font-size="4.8" font-weight="normal" fill="#3a3a3a" textLength="10.9" lengthAdjust="spacingAndGlyphs">MİDİ</text><text x="67.0" y="465.05" font-size="4.8" font-weight="normal" fill="#3a3a3a" textLength="31.8" lengthAdjust="spacingAndGlyphs">MAKSİ (Bilek)</text></g>
<g font-family="Liberation Sans"><g transform="translate(0,0)"><rect x="298" y="215.4" width="85" height="20.5" fill="#f08bbd"/><text x="301.9" y="228.44" font-size="6.4" font-weight="normal" fill="#222" textLength="75.9" lengthAdjust="spacingAndGlyphs">DÜZ DAR ETEK TEKNİK ÇİZİMİ</text><text x="309.4" y="247.38" font-size="4.8" font-weight="bold" fill="#1a1a1a" textLength="30.2" lengthAdjust="spacingAndGlyphs">MODEL TANIMI</text><text x="309.4" y="259.58" font-size="5.0" font-weight="bold" fill="#1a1a1a">1.</text><text x="315.5" y="259.58" font-size="5.0" font-weight="bold" fill="#1a1a1a" textLength="17.5" lengthAdjust="spacingAndGlyphs">Simetrik</text><text x="309.4" y="265.41" font-size="5.0" font-weight="bold" fill="#1a1a1a">2.</text><text x="315.5" y="265.41" font-size="5.0" font-weight="bold" fill="#1a1a1a" textLength="15.5" lengthAdjust="spacingAndGlyphs">Kemerli</text><text x="309.4" y="271.24" font-size="5.0" font-weight="bold" fill="#1a1a1a">3.</text><text x="315.5" y="271.24" font-size="5.0" font-weight="bold" fill="#1a1a1a" textLength="12.5" lengthAdjust="spacingAndGlyphs">Pensli</text><text x="309.4" y="277.07" font-size="5.0" font-weight="bold" fill="#1a1a1a">4.</text><text x="315.5" y="277.07" font-size="5.0" font-weight="bold" fill="#1a1a1a" textLength="50.3" lengthAdjust="spacingAndGlyphs">Arka ortası gizli fermuarlı</text><text x="309.4" y="282.90" font-size="5.0" font-weight="bold" fill="#1a1a1a">5.</text><text x="315.5" y="282.90" font-size="5.0" font-weight="bold" fill="#1a1a1a" textLength="15.5" lengthAdjust="spacingAndGlyphs">Mini Boy</text><rect x="458.8" y="455" width="85.7" height="20.6" fill="#f08bbd"/><text x="489.2" y="467.84" font-size="6.4" font-weight="normal" fill="#222" textLength="27.6" lengthAdjust="spacingAndGlyphs">GÜL ŞANA</text><g fill="none" stroke="#3c3c3c" stroke-width="0.8">
<rect x="362.2" y="310" width="39.8" height="6.4"/>
<path d="M362.2 316.4 C357 327 354 340 353.8 354.5 L353.4 402.7 L410.6 402.7 L410 354.5 C410 340 407 327 402 316.4"/>
<rect x="441.4" y="310" width="39.4" height="6.4"/>
<path d="M441.4 316.4 C436 327 433 340 433 354.5 L432.6 402.3 L461.4 402.7 L489.7 402.7 L489.7 354.5 C489.5 340 486 327 480.8 316.4"/>
</g>
<line x1="461.4" y1="310" x2="461.4" y2="402.7" stroke="#3a3a3a" stroke-width="0.95"/>
<path d="M461.5 310.5 L463 313" stroke="#333" stroke-width="0.7"/>
<g stroke="#9a9a9a" stroke-width="0.6"><line x1="370.6" y1="317" x2="370.2" y2="329.4"/><line x1="394.3" y1="317" x2="394.7" y2="329.4"/><line x1="450.9" y1="317" x2="450.5" y2="329.4"/><line x1="471.8" y1="317" x2="472.2" y2="329.4"/></g>
</g><g transform="translate(254,0)"><rect x="298" y="215.4" width="85" height="20.5" fill="#f08bbd"/><text x="301.9" y="228.44" font-size="6.4" font-weight="normal" fill="#222" textLength="75.9" lengthAdjust="spacingAndGlyphs">DÜZ DAR ETEK TEKNİK ÇİZİMİ</text><text x="309.4" y="247.38" font-size="4.8" font-weight="bold" fill="#1a1a1a" textLength="30.2" lengthAdjust="spacingAndGlyphs">MODEL TANIMI</text><text x="309.4" y="259.58" font-size="5.0" font-weight="bold" fill="#1a1a1a">1.</text><text x="315.5" y="259.58" font-size="5.0" font-weight="bold" fill="#1a1a1a" textLength="17.5" lengthAdjust="spacingAndGlyphs">Simetrik</text><text x="309.4" y="265.41" font-size="5.0" font-weight="bold" fill="#1a1a1a">2.</text><text x="315.5" y="265.41" font-size="5.0" font-weight="bold" fill="#1a1a1a" textLength="15.5" lengthAdjust="spacingAndGlyphs">Kemerli</text><text x="309.4" y="271.24" font-size="5.0" font-weight="bold" fill="#1a1a1a">3.</text><text x="315.5" y="271.24" font-size="5.0" font-weight="bold" fill="#1a1a1a" textLength="12.5" lengthAdjust="spacingAndGlyphs">Pensli</text><text x="309.4" y="277.07" font-size="5.0" font-weight="bold" fill="#1a1a1a">4.</text><text x="315.5" y="277.07" font-size="5.0" font-weight="bold" fill="#1a1a1a" textLength="50.3" lengthAdjust="spacingAndGlyphs">Arka ortası gizli fermuarlı</text><text x="309.4" y="282.90" font-size="5.0" font-weight="bold" fill="#1a1a1a">5.</text><text x="315.5" y="282.90" font-size="5.0" font-weight="bold" fill="#1a1a1a" textLength="32" lengthAdjust="spacingAndGlyphs">Kapak yırtmaçlı</text><text x="309.4" y="288.73" font-size="5.0" font-weight="bold" fill="#1a1a1a">6.</text><text x="315.5" y="288.73" font-size="5.0" font-weight="bold" fill="#1a1a1a" textLength="18" lengthAdjust="spacingAndGlyphs">Diz Boyu</text><rect x="458.8" y="455" width="85.7" height="20.6" fill="#f08bbd"/><text x="489.2" y="467.84" font-size="6.4" font-weight="normal" fill="#222" textLength="27.6" lengthAdjust="spacingAndGlyphs">GÜL ŞANA</text><g transform="translate(-254,0)"><g fill="none" stroke="#3c3c3c" stroke-width="0.8">
<rect x="619.4" y="309" width="38.6" height="5.2"/>
<path d="M619.4 314.2 C614 324 611 335 610.7 347.3 L610.7 423.6 L666.3 423.6 L666.3 347.3 C666 335 663 324 658 314.2"/>
<rect x="701.8" y="309" width="39" height="5.2"/>
<path d="M701.8 314.2 C697 324 694 335 693.5 347.3 L693.5 423.6 L749.1 423.6 L749.1 347.3 C749 335 746 324 740.8 314.2"/>
</g>
<line x1="721.2" y1="314.2" x2="721.2" y2="423.6" stroke="#3a3a3a" stroke-width="0.95"/>
<path d="M717.5 395.5 L720.5 393.5" stroke="#999" stroke-width="0.6"/>
<g stroke="#9a9a9a" stroke-width="0.6"><line x1="627.2" y1="314.5" x2="626.8" y2="325"/><line x1="650.2" y1="314.5" x2="650.6" y2="325"/><line x1="710.8" y1="314.5" x2="710.4" y2="332"/><line x1="731.4" y1="314.5" x2="731.8" y2="332"/></g>
</g>
</g>
<rect x="804" y="215.4" width="20" height="20.5" fill="#f08bbd"/>
<text x="808.5" y="228.44" font-size="5.6" font-weight="normal" fill="#2a2a2a" textLength="10" lengthAdjust="spacingAndGlyphs">DÜZ</text><rect x="815.6" y="256.70" width="1.2" height="2" fill="#555"/><rect x="815.6" y="262.53" width="1.2" height="2" fill="#555"/><rect x="815.6" y="268.36" width="1.2" height="2" fill="#555"/><rect x="815.6" y="274.19" width="1.2" height="2" fill="#555"/><rect x="815.6" y="280.02" width="1.2" height="2" fill="#555"/><rect x="815.6" y="285.85" width="1.2" height="2" fill="#555"/><text x="815.5" y="247.38" font-size="4.6" font-weight="bold" fill="#1a1a1a">M</text></g>
</svg>
</div>
<div id="vscroll" class="a"></div>
<div id="status" class="a"></div>
<div class="a" style="left:0;top:538px;width:818px;height:1px;background:#3a3a3a"></div>
<div class="inp" style="left:2.6px;top:539.5px;width:33.5px;height:9.5px;background:#3d3d3d"></div>
<div class="t st" style="left:5px;top:542.2px">33,33%</div>
<div class="dd" style="left:36px;top:539.5px;width:12.3px;height:9.5px;background:#484848"></div>
<svg class="a" style="left:39px;top:542px" width="7" height="5" viewBox="0 0 7 5"><path d="M1 1 L3.5 3.3 L6 1" fill="none" stroke="#d0d0d0" stroke-width="1"/></svg>
<div class="inp" style="left:51px;top:539.5px;width:35px;height:9.5px;background:#3d3d3d"></div>
<div class="t st" style="left:53.5px;top:542.2px">0°</div>
<div class="dd" style="left:86px;top:539.5px;width:10.7px;height:9.5px;background:#484848"></div>
<svg class="a" style="left:88px;top:542px" width="7" height="5" viewBox="0 0 7 5"><path d="M1 1 L3.5 3.3 L6 1" fill="none" stroke="#d0d0d0" stroke-width="1"/></svg>
<svg class="a" style="left:102.5px;top:541px" width="6" height="6" viewBox="0 0 6 6"><path d="M0.7 0 L0.7 6" stroke="#6a6a6a" stroke-width="1"/><path d="M5.5 0.3 L1.8 3 L5.5 5.7 Z" fill="#6a6a6a"/></svg>
<svg class="a" style="left:115px;top:541px" width="5" height="6" viewBox="0 0 5 6"><path d="M4.5 0.3 L0.8 3 L4.5 5.7 Z" fill="#6a6a6a"/></svg>
<div class="inp" style="left:124.8px;top:539.5px;width:26.2px;height:9.5px;background:#3d3d3d"></div>
<div class="t st" style="left:126.5px;top:542.2px">1</div>
<div class="dd" style="left:151px;top:539.5px;width:12.4px;height:9.5px;background:#484848"></div>
<svg class="a" style="left:154px;top:542px" width="7" height="5" viewBox="0 0 7 5"><path d="M1 1 L3.5 3.3 L6 1" fill="none" stroke="#d0d0d0" stroke-width="1"/></svg>
<svg class="a" style="left:170px;top:541px" width="5" height="6" viewBox="0 0 5 6"><path d="M0.5 0.3 L4.2 3 L0.5 5.7 Z" fill="#d0d0d0"/></svg>
<svg class="a" style="left:180.5px;top:541px" width="6" height="6" viewBox="0 0 6 6"><path d="M0.5 0.3 L4.2 3 L0.5 5.7 Z" fill="#d0d0d0"/><path d="M5.3 0 L5.3 6" stroke="#d0d0d0" stroke-width="1"/></svg>
<div class="a" style="left:191px;top:539px;width:146px;height:10px;background:#454545;border-left:1px solid #3a3a3a;border-right:1px solid #3a3a3a"></div>
<div class="t st" style="left:245px;top:542.2px;color:#c8c8c8">Selection</div>
<svg class="a" style="left:330px;top:541px" width="5" height="6" viewBox="0 0 5 6"><path d="M0.5 0.3 L4.2 3 L0.5 5.7 Z" fill="#d0d0d0"/></svg>
<div class="a" style="left:337px;top:538px;width:481px;height:11px;background:#464646"></div>
<svg class="a" style="left:340px;top:540px" width="4" height="6" viewBox="0 0 4 6"><path d="M3.3 0.5 L1 3 L3.3 5.5" fill="none" stroke="#9a9a9a" stroke-width="0.9"/></svg>
<svg class="a" style="left:810.5px;top:541.5px" width="4" height="6" viewBox="0 0 4 6"><path d="M0.7 0.5 L3 3 L0.7 5.5" fill="none" stroke="#9a9a9a" stroke-width="0.9"/></svg>
<div class="a" style="left:567.6px;top:538.8px;width:17.6px;height:8.7px;background:#5e5e5e;border-radius:4.4px"></div>
<div class="a" style="left:818px;top:538px;width:11px;height:11px;background:#424242"></div>
<svg class="a" style="left:819.5px;top:529.5px" width="7" height="5" viewBox="0 0 7 5"><path d="M1 1 L3.5 3.5 L6 1" fill="none" stroke="#9a9a9a" stroke-width="0.9"/></svg>
<div class="a" style="left:818.6px;top:288.9px;width:9.6px;height:17.1px;background:#5e5e5e;border-radius:4.8px"></div>

<!-- ICON COLUMN -->
<div id="iconcol" class="a"></div>
<div class="a" style="left:829px;top:43px;width:1px;height:506px;background:#3a3a3a"></div>
<div class="a" style="left:855.5px;top:43px;width:1.5px;height:506px;background:#3a3a3a"></div>
<div class="a" style="left:830px;top:51px;width:25.5px;height:46px;background:#535353"></div>
<div class="a" style="left:830px;top:97px;width:25.5px;height:65px;background:#535353;border-top:1px solid #3e3e3e"></div>
<div class="a" style="left:830px;top:162px;width:25.5px;height:46px;background:#535353;border-top:1px solid #3e3e3e;border-bottom:1px solid #3e3e3e"></div>
<div class="a" style="left:830px;top:43px;width:25.5px;height:8px;background:#434343;border-bottom:1px solid #3a3a3a"></div>
<svg class="a" style="left:847px;top:45px" width="6" height="4" viewBox="0 0 6 4"><path d="M2.5 0.5 L0.5 2 L2.5 3.5 M5.5 0.5 L3.5 2 L5.5 3.5" fill="none" stroke="#bdbdbd" stroke-width="0.8"/></svg>
<div class="a grip" style="left:836px;top:54px"></div>
<div class="a grip" style="left:836px;top:100px"></div>
<div class="a grip" style="left:836px;top:165px"></div>
<div class="a" style="left:833.5px;top:60.3px;width:17.5px;height:13.6px;background:#383838"></div>
<svg class="a" style="left:836px;top:61.5px" width="13" height="11" viewBox="0 0 13 11"><path d="M6.5 1 C10.5 1 12.5 3.5 12.3 5.5 C12 7.5 10 7 9 7.5 C8 8 9 10 6.5 10 C3 10 0.7 8 0.7 5.5 C0.7 3 3 1 6.5 1 Z" fill="#e6e6e6"/><circle cx="3.3" cy="6.5" r="1" fill="#383838"/><circle cx="5.5" cy="8.3" r="0.9" fill="#383838"/><circle cx="8.2" cy="3.2" r="0.9" fill="#383838"/><circle cx="10" cy="5" r="0.8" fill="#383838"/><circle cx="5.5" cy="3.5" r="0.8" fill="#383838"/></svg>
<svg class="a" style="left:837.5px;top:80px" width="11" height="11" viewBox="0 0 11 11"><defs><linearGradient id="gg" x1="0" y1="0" x2="1" y2="0"><stop offset="0" stop-color="#222"/><stop offset="1" stop-color="#eee"/></linearGradient></defs><path d="M0.5 0.5 C6 0.5 10.5 5 10.5 10.5 L0.5 10.5 Z" fill="url(#gg)" stroke="#e0e0e0" stroke-width="0.7"/></svg>
<svg class="a" style="left:837px;top:108.5px" width="12" height="10" viewBox="0 0 12 10"><path d="M0 1 L12 1 M0 4.8 L12 4.8 M0 8.6 L12 8.6" stroke="#dcdcdc" stroke-width="1.4"/></svg>
<svg class="a" style="left:837px;top:127.5px" width="12" height="9.5" viewBox="0 0 12 9.5"><defs><linearGradient id="g2" x1="0" y1="0" x2="1" y2="0"><stop offset="0" stop-color="#333"/><stop offset="1" stop-color="#f0f0f0"/></linearGradient></defs><rect x="0.5" y="0.5" width="11" height="8.5" fill="url(#g2)" stroke="#dcdcdc" stroke-width="0.9"/></svg>
<svg class="a" style="left:836.5px;top:139.5px" width="13" height="18" viewBox="0 0 13 18"><circle cx="5" cy="6" r="4.6" fill="#cfcfcf"/><circle cx="8" cy="10" r="5" fill="#9a9a9a" stroke="#dcdcdc" stroke-width="0.8"/></svg>
<svg class="a" style="left:837px;top:172.5px" width="12" height="12" viewBox="0 0 12 12"><circle cx="6" cy="6" r="4" fill="#e6e6e6"/><circle cx="6" cy="6" r="5.4" fill="none" stroke="#bdbdbd" stroke-width="0.8" stroke-dasharray="1 1"/></svg>
<svg class="a" style="left:836.5px;top:191px" width="13" height="12" viewBox="0 0 13 12"><rect x="4" y="0.6" width="8.4" height="8.4" fill="none" stroke="#dcdcdc" stroke-width="1"/><path d="M1 6 L1 11 L6 11" fill="none" stroke="#dcdcdc" stroke-width="1"/><circle cx="3.5" cy="8.5" r="2" fill="none" stroke="#dcdcdc" stroke-width="0.9"/></svg>
<!-- PROPERTIES -->
<div id="props" class="a"></div>
<div class="a" style="left:857px;top:43px;width:167px;height:8px;background:#434343;border-bottom:1px solid #3a3a3a"></div>
<svg class="a" style="left:1014px;top:45px" width="6" height="4" viewBox="0 0 6 4"><path d="M0.5 0.5 L2.5 2 L0.5 3.5 M3.5 0.5 L5.5 2 L3.5 3.5" fill="none" stroke="#bdbdbd" stroke-width="0.8"/></svg>
<div class="a" style="left:857px;top:51px;width:167px;height:19px;background:#434343"></div>
<div class="a" style="left:893px;top:51.5px;width:44px;height:18.5px;background:#535353"></div>
<div class="a ptab" style="left:869px"></div><div class="a ptab" style="left:881.5px"></div><div class="a ptab" style="left:893px"></div><div class="a ptab" style="left:937px"></div><div class="a ptab" style="left:950px"></div><div class="a ptab" style="left:962.5px"></div><div class="a ptab" style="left:973.5px"></div><div class="a ptab" style="left:987.5px"></div><div class="a ptab" style="left:997px"></div>
<div class="a" style="left:857px;top:51px;width:12px;height:19px;overflow:hidden"><div class="t pt" style="left:4.5px;top:7.2px;color:#a8a8a8">Sw</div></div>
<div class="a" style="left:870px;top:51px;width:11.5px;height:19px;overflow:hidden"><div class="t pt" style="left:3.5px;top:7.2px;color:#a8a8a8">Br</div></div>
<div class="a" style="left:882.5px;top:51px;width:10.5px;height:19px;overflow:hidden"><div class="t pt" style="left:2.5px;top:7.2px;color:#a8a8a8">Sy</div></div>
<div class="t pt" style="left:898.8px;top:58.2px;font-weight:bold;color:#ececec">Properties</div>
<div class="a" style="left:938px;top:51px;width:12px;height:19px;overflow:hidden"><div class="t pt" style="left:3px;top:7.2px;color:#a8a8a8">Li</div></div>
<div class="a" style="left:951px;top:51px;width:11.5px;height:19px;overflow:hidden"><div class="t pt" style="left:2.5px;top:7.2px;color:#a8a8a8">La</div></div>
<div class="a" style="left:963.5px;top:51px;width:10px;height:19px;overflow:hidden"><div class="t pt" style="left:2.5px;top:7.2px;color:#a8a8a8">Tr</div></div>
<div class="a" style="left:974.5px;top:51px;width:13px;height:19px;overflow:hidden"><div class="t pt" style="left:3px;top:7.2px;color:#a8a8a8">Al</div></div>
<div class="a" style="left:988.5px;top:51px;width:8.5px;height:19px;overflow:hidden"><div class="t pt" style="left:2px;top:7.2px;color:#a8a8a8">Pa</div></div>
<div class="t pp" style="left:863.3px;top:78.6px">No Selection</div>
<div class="t pp" style="left:863.3px;top:101.7px">Document</div>
<div class="t pp" style="left:850px;width:60px;text-align:right;top:119.3px;font-size:7px;letter-spacing:0.2px">Units:</div>
<div class="a" style="left:913.8px;top:115.6px;width:76.7px;height:13.5px;background:#474747;border:1px solid #3e3e3e;border-radius:2px"></div>
<div class="t pp" style="left:917.8px;top:119.5px;color:#f0f0f0">Millimeters</div>
<svg class="a" style="left:982.5px;top:120px" width="7" height="5" viewBox="0 0 7 5"><path d="M0.8 1 L3.5 3.6 L6.2 1" fill="none" stroke="#d8d8d8" stroke-width="1.2"/></svg>
<div class="t pp" style="left:850px;width:60px;text-align:right;top:138.8px;font-size:7px;letter-spacing:0px">Artboard:</div>
<div class="inp" style="left:913.8px;top:135px;width:37.2px;height:13.8px;background:#3f3f3f;border-radius:2px 0 0 2px"></div>
<div class="dd" style="left:951px;top:135px;width:11.8px;height:13.8px;border-radius:0 2px 2px 0"></div>
<div class="t pp" style="left:915.5px;top:139px;color:#f0f0f0">1</div>
<svg class="a" style="left:953.5px;top:140px" width="7" height="5" viewBox="0 0 7 5"><path d="M0.8 1 L3.5 3.6 L6.2 1" fill="none" stroke="#d8d8d8" stroke-width="1.2"/></svg>
<svg class="a" style="left:972.5px;top:138.5px" width="5" height="7" viewBox="0 0 5 7"><path d="M4.5 0.5 L0.5 3.5 L4.5 6.5 Z" fill="#6f6f6f"/></svg>
<svg class="a" style="left:985.5px;top:138.5px" width="5" height="7" viewBox="0 0 5 7"><path d="M0.5 0.5 L4.5 3.5 L0.5 6.5 Z" fill="#d8d8d8"/></svg>
<div class="btn" style="left:913px;top:154px;width:77px;height:13.8px"></div>
<div class="t pp" style="left:930.2px;top:158.2px;color:#ececec;font-size:6.9px">Edit Artboards</div>
<div class="a pdiv" style="top:177.5px"></div>
<div class="t pp" style="left:863.3px;top:187.6px">Ruler &amp; Grids</div>
<div class="a" style="left:920.6px;top:183px;width:14.3px;height:14.4px;background:#383838;border-radius:1px"></div>
<svg class="a" style="left:923px;top:185.5px" width="10" height="10" viewBox="0 0 10 10"><path d="M0 0 L10 0 L10 3 L3 3 L3 10 L0 10 Z" fill="#e8e8e8"/><path d="M4 1.5 L9.5 1.5 M1.5 4 L1.5 9.5" stroke="#383838" stroke-width="0.7" stroke-dasharray="0.8 0.8"/></svg>
<svg class="a" style="left:942px;top:185px" width="12" height="11" viewBox="0 0 12 11"><rect x="0.5" y="0.5" width="11" height="10" fill="none" stroke="#cfcfcf" stroke-width="0.9"/><path d="M4.2 0.5 L4.2 10.5 M7.8 0.5 L7.8 10.5 M0.5 3.8 L11.5 3.8 M0.5 7.2 L11.5 7.2" stroke="#cfcfcf" stroke-width="0.9"/></svg>
<svg class="a" style="left:962.2px;top:185px" width="12" height="11" viewBox="0 0 12 11"><rect x="0.5" y="0.5" width="11" height="10" fill="none" stroke="#c0c0c0" stroke-width="0.9"/><circle cx="2.6" cy="2.4" r="1.35" fill="none" stroke="#a0a0a0" stroke-width="0.7"/><circle cx="2.6" cy="5.5" r="1.35" fill="none" stroke="#a0a0a0" stroke-width="0.7"/><circle cx="2.6" cy="8.6" r="1.35" fill="none" stroke="#a0a0a0" stroke-width="0.7"/><circle cx="6.0" cy="2.4" r="1.35" fill="none" stroke="#a0a0a0" stroke-width="0.7"/><circle cx="6.0" cy="5.5" r="1.35" fill="none" stroke="#a0a0a0" stroke-width="0.7"/><circle cx="6.0" cy="8.6" r="1.35" fill="none" stroke="#a0a0a0" stroke-width="0.7"/><circle cx="9.4" cy="2.4" r="1.35" fill="none" stroke="#a0a0a0" stroke-width="0.7"/><circle cx="9.4" cy="5.5" r="1.35" fill="none" stroke="#a0a0a0" stroke-width="0.7"/><circle cx="9.4" cy="8.6" r="1.35" fill="none" stroke="#a0a0a0" stroke-width="0.7"/></svg>
<div class="a pdiv" style="top:202.8px"></div>
<div class="t pp" style="left:863.3px;top:212.3px">Guides</div>
<svg class="a" style="left:922px;top:209.5px" width="12" height="12" viewBox="0 0 12 12"><path d="M3.3 0.3 L3.3 11.7 M5.6 0.3 L5.6 11.7 M0.3 4.3 L11.7 4.3 M0.3 7.8 L11.7 7.8" stroke="#b8b8b8" stroke-width="0.8"/></svg>
<svg class="a" style="left:942.5px;top:209px" width="12" height="13" viewBox="0 0 12 13"><path d="M3.5 0 L3.5 13 M6 0 L6 13 M0 4.5 L12 4.5 M0 8 L8 8" stroke="#6e6e6e" stroke-width="0.9"/><rect x="7" y="8.5" width="4.5" height="4" fill="#6e6e6e"/></svg>
<div class="a" style="left:961px;top:208.3px;width:14.3px;height:14.2px;background:#383838;border-radius:1px"></div>
<svg class="a" style="left:962.5px;top:209.5px" width="12" height="12" viewBox="0 0 12 12"><path d="M3 0.5 L3 11.5 M0.5 3 L8 3 M5 1.2 L3.3 3 L5 4.8" fill="none" stroke="#ececec" stroke-width="0.9"/><path d="M9 4.5 L6.8 8 L8.6 8 L7.5 11.5 L10.5 7 L8.8 7 Z" fill="#ececec"/></svg>
<div class="a pdiv" style="top:228.6px"></div>
<div class="t pp" style="left:863.3px;top:238px">Snap Options</div>
<div class="a" style="left:920.6px;top:233.5px;width:14.3px;height:14.2px;background:#383838;border-radius:1px"></div>
<svg class="a" style="left:922px;top:235px" width="12" height="11" viewBox="0 0 12 11"><path d="M2.5 0.3 L2.5 10.7" stroke="#ececec" stroke-width="0.9"/><path d="M2.5 3.6 L3.8 5.5 L2.5 7.4 L1.2 5.5 Z" fill="#ececec"/><path d="M5 3 L8.2 3 A2.5 2.5 0 0 1 8.2 8 L5 8" fill="none" stroke="#ececec" stroke-width="1.4"/></svg>
<svg class="a" style="left:942px;top:234.5px" width="12" height="12" viewBox="0 0 12 12"><path d="M3.6 0.3 L3.6 11" stroke="#d0d0d0" stroke-width="0.9"/><path d="M0.6 0.8 L3.4 0.8" stroke="#c8c8c8" stroke-width="0.6"/><path d="M0.6 2.4 L3.4 2.4" stroke="#c8c8c8" stroke-width="0.6"/><path d="M0.6 4.0 L3.4 4.0" stroke="#c8c8c8" stroke-width="0.6"/><path d="M0.6 5.6 L3.4 5.6" stroke="#c8c8c8" stroke-width="0.6"/><path d="M0.6 7.2 L3.4 7.2" stroke="#c8c8c8" stroke-width="0.6"/><path d="M0.6 8.8 L3.4 8.8" stroke="#c8c8c8" stroke-width="0.6"/><path d="M0.6 10.4 L3.4 10.4" stroke="#c8c8c8" stroke-width="0.6"/><path d="M4.5 3.2 L8.3 3.2 A2.5 2.5 0 0 1 8.3 8.2 L4.5 8.2" fill="none" stroke="#d0d0d0" stroke-width="1.4"/></svg>
<svg class="a" style="left:962px;top:235px" width="12" height="11" viewBox="0 0 12 11"><rect x="1" y="0.5" width="2.3" height="2.3" fill="#cfcfcf"/><rect x="1" y="4.3" width="2.3" height="2.3" fill="#cfcfcf"/><rect x="1" y="8.1" width="2.3" height="2.3" fill="#cfcfcf"/><path d="M5 3 L8.3 3 A2.5 2.5 0 0 1 8.3 8 L5 8" fill="none" stroke="#cfcfcf" stroke-width="1.3"/></svg>
<div class="a pdiv" style="top:253.6px"></div>
<div class="t pp" style="left:863.3px;top:261.3px">Preferences</div>
<div class="t pp" style="left:862.7px;top:278.8px">Keyboard Increment:</div>
<div class="inp" style="left:928.3px;top:275.5px;width:38.7px;height:14px;background:#3f3f3f;border-radius:2px"></div>
<div class="t pp" style="left:931px;top:278.8px;color:#f0f0f0">2,4694 mm</div>
<div class="a cb" style="top:297.4px"></div><div class="t pp" style="left:875.1px;top:298.9px">Use Preview Bounds</div>
<div class="a cb" style="top:313.4px"></div><div class="t pp" style="left:875.1px;top:314.9px">Scale Corners</div>
<div class="a cb" style="top:329.1px"></div><div class="t pp" style="left:875.1px;top:330.6px">Scale Strokes &amp; Effects</div>
<div class="a pdiv" style="top:347.4px"></div>
<div class="t pp" style="left:863.3px;top:360.7px">Quick Actions</div>
<div class="btn" style="left:863px;top:374.7px;width:77.3px;height:14.3px"></div>
<div class="t pp" style="left:877px;top:379.3px;color:#ececec">Document Setup</div>
<div class="btn" style="left:947.3px;top:374.7px;width:67.4px;height:14.3px"></div>
<div class="t pp" style="left:962.5px;top:379.3px;color:#ececec">Preferences</div>
<!-- COLOR PANEL -->
<div class="a" style="left:664px;top:50px;width:165px;height:73.5px;background:#535353;border-top:1px solid #393939;border-left:1px solid #3c3c3c"></div>
<div class="a" style="left:665px;top:51px;width:164px;height:19px;background:#434343"></div>
<div class="a" style="left:665px;top:52.5px;width:33px;height:17.5px;background:#535353"></div>
<div class="a" style="left:698px;top:51px;width:1px;height:19px;background:#3c3c3c"></div>
<div class="a" style="left:747.5px;top:51px;width:1px;height:19px;background:#3c3c3c"></div>
<svg class="a" style="left:667px;top:57px" width="4" height="7" viewBox="0 0 4 7"><path d="M0.5 2.8 L2 0.8 L3.5 2.8 M0.5 4.2 L2 6.2 L3.5 4.2" fill="none" stroke="#9a9a9a" stroke-width="0.7"/></svg>
<div class="t pt" style="left:674.5px;top:58.6px;font-weight:bold;color:#ececec">Color</div>
<div class="t pt" style="left:703.5px;top:58.6px;color:#c8c8c8">Color Guide</div>
<svg class="a" style="left:801px;top:58px" width="8" height="7" viewBox="0 0 8 7"><path d="M0.8 0.8 L3.3 3.5 L0.8 6.2 M4.3 0.8 L6.8 3.5 L4.3 6.2" fill="none" stroke="#d0d0d0" stroke-width="1.1"/></svg>
<div class="a" style="left:812.5px;top:57px;width:1px;height:8px;background:#8a8a8a"></div>
<svg class="a" style="left:818px;top:58.5px" width="7" height="6" viewBox="0 0 7 6"><path d="M0 0.7 L7 0.7 M0 3 L7 3 M0 5.3 L7 5.3" stroke="#d0d0d0" stroke-width="1"/></svg>
<div class="a" style="left:668.3px;top:77px;width:8.4px;height:8px;background:#fff;overflow:hidden"><div class="a" style="left:-2px;top:3.5px;width:13px;height:1.2px;background:#ee1c1c;transform:rotate(-45deg)"></div></div>
<div class="a" style="left:676.6px;top:77px;width:8.9px;height:8px;background:#000"></div>
<div class="a" style="left:685.5px;top:77px;width:8.7px;height:8px;background:#fff"></div>
<svg class="a" style="left:769.5px;top:78.5px" width="6" height="6" viewBox="0 0 6 6"><path d="M2 0.3 L1.4 5.7 M4.3 0.3 L3.7 5.7 M0.4 2 L5.6 2 M0.2 4 L5.4 4" stroke="#e0e0e0" stroke-width="0.6"/></svg>
<div class="a" style="left:769.5px;top:85.5px;width:5px;height:1px;border-top:1px dotted #9a9a9a"></div>
<div class="inp" style="left:778.5px;top:75px;width:38.5px;height:12px;background:#3f3f3f;border:1px solid #4a4a4a;border-radius:2px"></div>
<div class="t" style="left:781.8px;top:78.3px;font-size:7.2px;color:#e6e6e6;letter-spacing:-0.55px">FFFFFF</div>
<svg class="a" style="left:668.5px;top:92.5px" width="148.5" height="21" viewBox="0 0 148.5 21" shape-rendering="crispEdges"><rect x="0.0" y="0.0" width="2.05" height="2.65" fill="#fbe0e0"/><rect x="0.0" y="2.6" width="2.05" height="2.65" fill="#f6aeae"/><rect x="0.0" y="5.2" width="2.05" height="2.65" fill="#f17a7a"/><rect x="0.0" y="7.8" width="2.05" height="2.65" fill="#eb4142"/><rect x="0.0" y="10.4" width="2.05" height="2.65" fill="#d62526"/><rect x="0.0" y="13.0" width="2.05" height="2.65" fill="#ab1e1e"/><rect x="0.0" y="15.6" width="2.05" height="2.65" fill="#761515"/><rect x="0.0" y="18.2" width="2.05" height="2.65" fill="#3b0a0a"/><rect x="0.0" y="20.8" width="2.05" height="2.65" fill="#170404"/><rect x="2.0" y="0.0" width="2.05" height="2.65" fill="#fce1e0"/><rect x="2.0" y="2.6" width="2.05" height="2.65" fill="#f7b2af"/><rect x="2.0" y="5.2" width="2.05" height="2.65" fill="#f2817b"/><rect x="2.0" y="7.8" width="2.05" height="2.65" fill="#ed4c44"/><rect x="2.0" y="10.4" width="2.05" height="2.65" fill="#d92f26"/><rect x="2.0" y="13.0" width="2.05" height="2.65" fill="#ad261e"/><rect x="2.0" y="15.6" width="2.05" height="2.65" fill="#781a15"/><rect x="2.0" y="18.2" width="2.05" height="2.65" fill="#3c0d0a"/><rect x="2.0" y="20.8" width="2.05" height="2.65" fill="#170504"/><rect x="4.0" y="0.0" width="2.05" height="2.65" fill="#fce3e0"/><rect x="4.0" y="2.6" width="2.05" height="2.65" fill="#f8b7b0"/><rect x="4.0" y="5.2" width="2.05" height="2.65" fill="#f3897d"/><rect x="4.0" y="7.8" width="2.05" height="2.65" fill="#ee5746"/><rect x="4.0" y="10.4" width="2.05" height="2.65" fill="#dc3926"/><rect x="4.0" y="13.0" width="2.05" height="2.65" fill="#b02e1e"/><rect x="4.0" y="15.6" width="2.05" height="2.65" fill="#7a2015"/><rect x="4.0" y="18.2" width="2.05" height="2.65" fill="#3d100a"/><rect x="4.0" y="20.8" width="2.05" height="2.65" fill="#170604"/><rect x="6.0" y="0.0" width="2.05" height="2.65" fill="#fce5e1"/><rect x="6.0" y="2.6" width="2.05" height="2.65" fill="#f8bcb0"/><rect x="6.0" y="5.2" width="2.05" height="2.65" fill="#f4917e"/><rect x="6.0" y="7.8" width="2.05" height="2.65" fill="#f06248"/><rect x="6.0" y="10.4" width="2.05" height="2.65" fill="#df4326"/><rect x="6.0" y="13.0" width="2.05" height="2.65" fill="#b3361f"/><rect x="6.0" y="15.6" width="2.05" height="2.65" fill="#7c2515"/><rect x="6.0" y="18.2" width="2.05" height="2.65" fill="#3e120a"/><rect x="6.0" y="20.8" width="2.05" height="2.65" fill="#170704"/><rect x="8.0" y="0.0" width="2.05" height="2.65" fill="#fce7e1"/><rect x="8.0" y="2.6" width="2.05" height="2.65" fill="#f9c0b1"/><rect x="8.0" y="5.2" width="2.05" height="2.65" fill="#f5987f"/><rect x="8.0" y="7.8" width="2.05" height="2.65" fill="#f26d4a"/><rect x="8.0" y="10.4" width="2.05" height="2.65" fill="#e24e26"/><rect x="8.0" y="13.0" width="2.05" height="2.65" fill="#b53e1f"/><rect x="8.0" y="15.6" width="2.05" height="2.65" fill="#7e2b15"/><rect x="8.0" y="18.2" width="2.05" height="2.65" fill="#3f150a"/><rect x="8.0" y="20.8" width="2.05" height="2.65" fill="#170804"/><rect x="10.0" y="0.0" width="2.05" height="2.65" fill="#fde8e1"/><rect x="10.0" y="2.6" width="2.05" height="2.65" fill="#fac5b1"/><rect x="10.0" y="5.2" width="2.05" height="2.65" fill="#f7a180"/><rect x="10.0" y="7.8" width="2.05" height="2.65" fill="#f3794b"/><rect x="10.0" y="10.4" width="2.05" height="2.65" fill="#e55a26"/><rect x="10.0" y="13.0" width="2.05" height="2.65" fill="#b8481e"/><rect x="10.0" y="15.6" width="2.05" height="2.65" fill="#803215"/><rect x="10.0" y="18.2" width="2.05" height="2.65" fill="#3f190a"/><rect x="10.0" y="20.8" width="2.05" height="2.65" fill="#180904"/><rect x="12.0" y="0.0" width="2.05" height="2.65" fill="#fdebe1"/><rect x="12.0" y="2.6" width="2.05" height="2.65" fill="#faccb1"/><rect x="12.0" y="5.2" width="2.05" height="2.65" fill="#f7ac80"/><rect x="12.0" y="7.8" width="2.05" height="2.65" fill="#f48a4c"/><rect x="12.0" y="10.4" width="2.05" height="2.65" fill="#e86c23"/><rect x="12.0" y="13.0" width="2.05" height="2.65" fill="#bb571c"/><rect x="12.0" y="15.6" width="2.05" height="2.65" fill="#823c13"/><rect x="12.0" y="18.2" width="2.05" height="2.65" fill="#401e09"/><rect x="12.0" y="20.8" width="2.05" height="2.65" fill="#180b03"/><rect x="14.0" y="0.0" width="2.05" height="2.65" fill="#fdeee1"/><rect x="14.0" y="2.6" width="2.05" height="2.65" fill="#fbd3b1"/><rect x="14.0" y="5.2" width="2.05" height="2.65" fill="#f8b780"/><rect x="14.0" y="7.8" width="2.05" height="2.65" fill="#f69a4c"/><rect x="14.0" y="10.4" width="2.05" height="2.65" fill="#ec7e20"/><rect x="14.0" y="13.0" width="2.05" height="2.65" fill="#bf661a"/><rect x="14.0" y="15.6" width="2.05" height="2.65" fill="#844612"/><rect x="14.0" y="18.2" width="2.05" height="2.65" fill="#412309"/><rect x="14.0" y="20.8" width="2.05" height="2.65" fill="#180d03"/><rect x="16.0" y="0.0" width="2.05" height="2.65" fill="#fdf0e1"/><rect x="16.0" y="2.6" width="2.05" height="2.65" fill="#fbdab2"/><rect x="16.0" y="5.2" width="2.05" height="2.65" fill="#f9c281"/><rect x="16.0" y="7.8" width="2.05" height="2.65" fill="#f7aa4d"/><rect x="16.0" y="10.4" width="2.05" height="2.65" fill="#ef901d"/><rect x="16.0" y="13.0" width="2.05" height="2.65" fill="#c27518"/><rect x="16.0" y="15.6" width="2.05" height="2.65" fill="#875110"/><rect x="16.0" y="18.2" width="2.05" height="2.65" fill="#432808"/><rect x="16.0" y="20.8" width="2.05" height="2.65" fill="#180e03"/><rect x="18.0" y="0.0" width="2.05" height="2.65" fill="#fdf3e1"/><rect x="18.0" y="2.6" width="2.05" height="2.65" fill="#fce0b2"/><rect x="18.0" y="5.2" width="2.05" height="2.65" fill="#facd81"/><rect x="18.0" y="7.8" width="2.05" height="2.65" fill="#f8b94d"/><rect x="18.0" y="10.4" width="2.05" height="2.65" fill="#f2a21b"/><rect x="18.0" y="13.0" width="2.05" height="2.65" fill="#c58416"/><rect x="18.0" y="15.6" width="2.05" height="2.65" fill="#895c0f"/><rect x="18.0" y="18.2" width="2.05" height="2.65" fill="#442d07"/><rect x="18.0" y="20.8" width="2.05" height="2.65" fill="#181002"/><rect x="20.0" y="0.0" width="2.05" height="2.65" fill="#fdf5e1"/><rect x="20.0" y="2.6" width="2.05" height="2.65" fill="#fbe6b2"/><rect x="20.0" y="5.2" width="2.05" height="2.65" fill="#fad682"/><rect x="20.0" y="7.8" width="2.05" height="2.65" fill="#f7c64f"/><rect x="20.0" y="10.4" width="2.05" height="2.65" fill="#f3b31a"/><rect x="20.0" y="13.0" width="2.05" height="2.65" fill="#c79315"/><rect x="20.0" y="15.6" width="2.05" height="2.65" fill="#8a660f"/><rect x="20.0" y="18.2" width="2.05" height="2.65" fill="#443207"/><rect x="20.0" y="20.8" width="2.05" height="2.65" fill="#181202"/><rect x="22.0" y="0.0" width="2.05" height="2.65" fill="#fdf7e1"/><rect x="22.0" y="2.6" width="2.05" height="2.65" fill="#fbebb3"/><rect x="22.0" y="5.2" width="2.05" height="2.65" fill="#f9df84"/><rect x="22.0" y="7.8" width="2.05" height="2.65" fill="#f7d351"/><rect x="22.0" y="10.4" width="2.05" height="2.65" fill="#f3c41a"/><rect x="22.0" y="13.0" width="2.05" height="2.65" fill="#c8a116"/><rect x="22.0" y="15.6" width="2.05" height="2.65" fill="#8b700f"/><rect x="22.0" y="18.2" width="2.05" height="2.65" fill="#443707"/><rect x="22.0" y="20.8" width="2.05" height="2.65" fill="#181302"/><rect x="24.0" y="0.0" width="2.05" height="2.65" fill="#fdf9e1"/><rect x="24.0" y="2.6" width="2.05" height="2.65" fill="#fbf1b4"/><rect x="24.0" y="5.2" width="2.05" height="2.65" fill="#f8e885"/><rect x="24.0" y="7.8" width="2.05" height="2.65" fill="#f6df54"/><rect x="24.0" y="10.4" width="2.05" height="2.65" fill="#f3d51b"/><rect x="24.0" y="13.0" width="2.05" height="2.65" fill="#c9b016"/><rect x="24.0" y="15.6" width="2.05" height="2.65" fill="#8c7b0f"/><rect x="24.0" y="18.2" width="2.05" height="2.65" fill="#453c07"/><rect x="24.0" y="20.8" width="2.05" height="2.65" fill="#181502"/><rect x="26.0" y="0.0" width="2.05" height="2.65" fill="#fdfbe2"/><rect x="26.0" y="2.6" width="2.05" height="2.65" fill="#faf5b5"/><rect x="26.0" y="5.2" width="2.05" height="2.65" fill="#f7f087"/><rect x="26.0" y="7.8" width="2.05" height="2.65" fill="#f4e956"/><rect x="26.0" y="10.4" width="2.05" height="2.65" fill="#f0e31f"/><rect x="26.0" y="13.0" width="2.05" height="2.65" fill="#c9bd17"/><rect x="26.0" y="15.6" width="2.05" height="2.65" fill="#8c8410"/><rect x="26.0" y="18.2" width="2.05" height="2.65" fill="#444007"/><rect x="26.0" y="20.8" width="2.05" height="2.65" fill="#181602"/><rect x="28.0" y="0.0" width="2.05" height="2.65" fill="#fbfbe2"/><rect x="28.0" y="2.6" width="2.05" height="2.65" fill="#f6f4b6"/><rect x="28.0" y="5.2" width="2.05" height="2.65" fill="#f1ee88"/><rect x="28.0" y="7.8" width="2.05" height="2.65" fill="#ebe758"/><rect x="28.0" y="10.4" width="2.05" height="2.65" fill="#e5df21"/><rect x="28.0" y="13.0" width="2.05" height="2.65" fill="#beb91a"/><rect x="28.0" y="15.6" width="2.05" height="2.65" fill="#848112"/><rect x="28.0" y="18.2" width="2.05" height="2.65" fill="#413f09"/><rect x="28.0" y="20.8" width="2.05" height="2.65" fill="#161603"/><rect x="30.0" y="0.0" width="2.05" height="2.65" fill="#fafae3"/><rect x="30.0" y="2.6" width="2.05" height="2.65" fill="#f2f3b7"/><rect x="30.0" y="5.2" width="2.05" height="2.65" fill="#ebec8a"/><rect x="30.0" y="7.8" width="2.05" height="2.65" fill="#e2e55b"/><rect x="30.0" y="10.4" width="2.05" height="2.65" fill="#d9dc24"/><rect x="30.0" y="13.0" width="2.05" height="2.65" fill="#b4b61e"/><rect x="30.0" y="15.6" width="2.05" height="2.65" fill="#7d7f15"/><rect x="30.0" y="18.2" width="2.05" height="2.65" fill="#3d3e0a"/><rect x="30.0" y="20.8" width="2.05" height="2.65" fill="#151603"/><rect x="32.0" y="0.0" width="2.05" height="2.65" fill="#f8fae3"/><rect x="32.0" y="2.6" width="2.05" height="2.65" fill="#eef2b8"/><rect x="32.0" y="5.2" width="2.05" height="2.65" fill="#e4ea8c"/><rect x="32.0" y="7.8" width="2.05" height="2.65" fill="#dae25d"/><rect x="32.0" y="10.4" width="2.05" height="2.65" fill="#cdd929"/><rect x="32.0" y="13.0" width="2.05" height="2.65" fill="#a9b222"/><rect x="32.0" y="15.6" width="2.05" height="2.65" fill="#767c17"/><rect x="32.0" y="18.2" width="2.05" height="2.65" fill="#3a3d0b"/><rect x="32.0" y="20.8" width="2.05" height="2.65" fill="#141504"/><rect x="34.0" y="0.0" width="2.05" height="2.65" fill="#f7f9e4"/><rect x="34.0" y="2.6" width="2.05" height="2.65" fill="#ebf1b9"/><rect x="34.0" y="5.2" width="2.05" height="2.65" fill="#dee98e"/><rect x="34.0" y="7.8" width="2.05" height="2.65" fill="#d1e05f"/><rect x="34.0" y="10.4" width="2.05" height="2.65" fill="#c1d52d"/><rect x="34.0" y="13.0" width="2.05" height="2.65" fill="#9faf25"/><rect x="34.0" y="15.6" width="2.05" height="2.65" fill="#6e7a1a"/><rect x="34.0" y="18.2" width="2.05" height="2.65" fill="#363c0c"/><rect x="34.0" y="20.8" width="2.05" height="2.65" fill="#131504"/><rect x="36.0" y="0.0" width="2.05" height="2.65" fill="#f5f9e4"/><rect x="36.0" y="2.6" width="2.05" height="2.65" fill="#e7f0ba"/><rect x="36.0" y="5.2" width="2.05" height="2.65" fill="#d8e78f"/><rect x="36.0" y="7.8" width="2.05" height="2.65" fill="#c8dd62"/><rect x="36.0" y="10.4" width="2.05" height="2.65" fill="#b6d132"/><rect x="36.0" y="13.0" width="2.05" height="2.65" fill="#95ac29"/><rect x="36.0" y="15.6" width="2.05" height="2.65" fill="#67771c"/><rect x="36.0" y="18.2" width="2.05" height="2.65" fill="#333b0e"/><rect x="36.0" y="20.8" width="2.05" height="2.65" fill="#121505"/><rect x="38.0" y="0.0" width="2.05" height="2.65" fill="#f4f8e4"/><rect x="38.0" y="2.6" width="2.05" height="2.65" fill="#e3efbc"/><rect x="38.0" y="5.2" width="2.05" height="2.65" fill="#d1e591"/><rect x="38.0" y="7.8" width="2.05" height="2.65" fill="#bfdb64"/><rect x="38.0" y="10.4" width="2.05" height="2.65" fill="#aace36"/><rect x="38.0" y="13.0" width="2.05" height="2.65" fill="#8ba82c"/><rect x="38.0" y="15.6" width="2.05" height="2.65" fill="#60751f"/><rect x="38.0" y="18.2" width="2.05" height="2.65" fill="#2f390f"/><rect x="38.0" y="20.8" width="2.05" height="2.65" fill="#111405"/><rect x="40.0" y="0.0" width="2.05" height="2.65" fill="#f2f8e5"/><rect x="40.0" y="2.6" width="2.05" height="2.65" fill="#deeebc"/><rect x="40.0" y="5.2" width="2.05" height="2.65" fill="#c9e392"/><rect x="40.0" y="7.8" width="2.05" height="2.65" fill="#b4d866"/><rect x="40.0" y="10.4" width="2.05" height="2.65" fill="#9cc93a"/><rect x="40.0" y="13.0" width="2.05" height="2.65" fill="#7fa42f"/><rect x="40.0" y="15.6" width="2.05" height="2.65" fill="#587220"/><rect x="40.0" y="18.2" width="2.05" height="2.65" fill="#2b3810"/><rect x="40.0" y="20.8" width="2.05" height="2.65" fill="#0f1405"/><rect x="42.0" y="0.0" width="2.05" height="2.65" fill="#f0f7e5"/><rect x="42.0" y="2.6" width="2.05" height="2.65" fill="#d9ecbc"/><rect x="42.0" y="5.2" width="2.05" height="2.65" fill="#c0e093"/><rect x="42.0" y="7.8" width="2.05" height="2.65" fill="#a7d466"/><rect x="42.0" y="10.4" width="2.05" height="2.65" fill="#8cc43c"/><rect x="42.0" y="13.0" width="2.05" height="2.65" fill="#72a030"/><rect x="42.0" y="15.6" width="2.05" height="2.65" fill="#4f6f22"/><rect x="42.0" y="18.2" width="2.05" height="2.65" fill="#273710"/><rect x="42.0" y="20.8" width="2.05" height="2.65" fill="#0e1406"/><rect x="44.0" y="0.0" width="2.05" height="2.65" fill="#eef7e5"/><rect x="44.0" y="2.6" width="2.05" height="2.65" fill="#d3eabd"/><rect x="44.0" y="5.2" width="2.05" height="2.65" fill="#b7de93"/><rect x="44.0" y="7.8" width="2.05" height="2.65" fill="#9ad066"/><rect x="44.0" y="10.4" width="2.05" height="2.65" fill="#7cbf3e"/><rect x="44.0" y="13.0" width="2.05" height="2.65" fill="#659b32"/><rect x="44.0" y="15.6" width="2.05" height="2.65" fill="#466b23"/><rect x="44.0" y="18.2" width="2.05" height="2.65" fill="#223511"/><rect x="44.0" y="20.8" width="2.05" height="2.65" fill="#0c1306"/><rect x="46.0" y="0.0" width="2.05" height="2.65" fill="#ebf6e5"/><rect x="46.0" y="2.6" width="2.05" height="2.65" fill="#cde9bd"/><rect x="46.0" y="5.2" width="2.05" height="2.65" fill="#aedb93"/><rect x="46.0" y="7.8" width="2.05" height="2.65" fill="#8ccc67"/><rect x="46.0" y="10.4" width="2.05" height="2.65" fill="#6dba40"/><rect x="46.0" y="13.0" width="2.05" height="2.65" fill="#589633"/><rect x="46.0" y="15.6" width="2.05" height="2.65" fill="#3d6824"/><rect x="46.0" y="18.2" width="2.05" height="2.65" fill="#1e3411"/><rect x="46.0" y="20.8" width="2.05" height="2.65" fill="#0b1306"/><rect x="48.0" y="0.0" width="2.05" height="2.65" fill="#e9f5e5"/><rect x="48.0" y="2.6" width="2.05" height="2.65" fill="#c7e7bd"/><rect x="48.0" y="5.2" width="2.05" height="2.65" fill="#a4d893"/><rect x="48.0" y="7.8" width="2.05" height="2.65" fill="#7ec867"/><rect x="48.0" y="10.4" width="2.05" height="2.65" fill="#5db542"/><rect x="48.0" y="13.0" width="2.05" height="2.65" fill="#4b9235"/><rect x="48.0" y="15.6" width="2.05" height="2.65" fill="#346525"/><rect x="48.0" y="18.2" width="2.05" height="2.65" fill="#1a3212"/><rect x="48.0" y="20.8" width="2.05" height="2.65" fill="#091206"/><rect x="50.0" y="0.0" width="2.05" height="2.65" fill="#e7f5e5"/><rect x="50.0" y="2.6" width="2.05" height="2.65" fill="#c1e5bd"/><rect x="50.0" y="5.2" width="2.05" height="2.65" fill="#9ad594"/><rect x="50.0" y="7.8" width="2.05" height="2.65" fill="#70c467"/><rect x="50.0" y="10.4" width="2.05" height="2.65" fill="#4eb044"/><rect x="50.0" y="13.0" width="2.05" height="2.65" fill="#3f8e36"/><rect x="50.0" y="15.6" width="2.05" height="2.65" fill="#2b6226"/><rect x="50.0" y="18.2" width="2.05" height="2.65" fill="#153112"/><rect x="50.0" y="20.8" width="2.05" height="2.65" fill="#081207"/><rect x="52.0" y="0.0" width="2.05" height="2.65" fill="#e5f4e6"/><rect x="52.0" y="2.6" width="2.05" height="2.65" fill="#bbe4be"/><rect x="52.0" y="5.2" width="2.05" height="2.65" fill="#90d294"/><rect x="52.0" y="7.8" width="2.05" height="2.65" fill="#62c067"/><rect x="52.0" y="10.4" width="2.05" height="2.65" fill="#3fab45"/><rect x="52.0" y="13.0" width="2.05" height="2.65" fill="#328938"/><rect x="52.0" y="15.6" width="2.05" height="2.65" fill="#235f27"/><rect x="52.0" y="18.2" width="2.05" height="2.65" fill="#112f13"/><rect x="52.0" y="20.8" width="2.05" height="2.65" fill="#061107"/><rect x="54.0" y="0.0" width="2.05" height="2.65" fill="#e4f4e6"/><rect x="54.0" y="2.6" width="2.05" height="2.65" fill="#b9e3bf"/><rect x="54.0" y="5.2" width="2.05" height="2.65" fill="#8cd196"/><rect x="54.0" y="7.8" width="2.05" height="2.65" fill="#5cbe6b"/><rect x="54.0" y="10.4" width="2.05" height="2.65" fill="#39a94a"/><rect x="54.0" y="13.0" width="2.05" height="2.65" fill="#2e873b"/><rect x="54.0" y="15.6" width="2.05" height="2.65" fill="#205e29"/><rect x="54.0" y="18.2" width="2.05" height="2.65" fill="#102f14"/><rect x="54.0" y="20.8" width="2.05" height="2.65" fill="#061107"/><rect x="56.0" y="0.0" width="2.05" height="2.65" fill="#e3f4e7"/><rect x="56.0" y="2.6" width="2.05" height="2.65" fill="#b8e2c1"/><rect x="56.0" y="5.2" width="2.05" height="2.65" fill="#8ad099"/><rect x="56.0" y="7.8" width="2.05" height="2.65" fill="#59bd6f"/><rect x="56.0" y="10.4" width="2.05" height="2.65" fill="#36a74f"/><rect x="56.0" y="13.0" width="2.05" height="2.65" fill="#2b863f"/><rect x="56.0" y="15.6" width="2.05" height="2.65" fill="#1e5d2c"/><rect x="56.0" y="18.2" width="2.05" height="2.65" fill="#0f2e16"/><rect x="56.0" y="20.8" width="2.05" height="2.65" fill="#051108"/><rect x="58.0" y="0.0" width="2.05" height="2.65" fill="#e3f3e8"/><rect x="58.0" y="2.6" width="2.05" height="2.65" fill="#b6e2c3"/><rect x="58.0" y="5.2" width="2.05" height="2.65" fill="#88cf9c"/><rect x="58.0" y="7.8" width="2.05" height="2.65" fill="#56bc73"/><rect x="58.0" y="10.4" width="2.05" height="2.65" fill="#33a654"/><rect x="58.0" y="13.0" width="2.05" height="2.65" fill="#298543"/><rect x="58.0" y="15.6" width="2.05" height="2.65" fill="#1c5c2e"/><rect x="58.0" y="18.2" width="2.05" height="2.65" fill="#0e2e17"/><rect x="58.0" y="20.8" width="2.05" height="2.65" fill="#051108"/><rect x="60.0" y="0.0" width="2.05" height="2.65" fill="#e2f3e8"/><rect x="60.0" y="2.6" width="2.05" height="2.65" fill="#b5e1c5"/><rect x="60.0" y="5.2" width="2.05" height="2.65" fill="#86ce9f"/><rect x="60.0" y="7.8" width="2.05" height="2.65" fill="#54ba77"/><rect x="60.0" y="10.4" width="2.05" height="2.65" fill="#30a459"/><rect x="60.0" y="13.0" width="2.05" height="2.65" fill="#278447"/><rect x="60.0" y="15.6" width="2.05" height="2.65" fill="#1b5b31"/><rect x="60.0" y="18.2" width="2.05" height="2.65" fill="#0d2d18"/><rect x="60.0" y="20.8" width="2.05" height="2.65" fill="#051109"/><rect x="62.0" y="0.0" width="2.05" height="2.65" fill="#e2f3e9"/><rect x="62.0" y="2.6" width="2.05" height="2.65" fill="#b4e1c6"/><rect x="62.0" y="5.2" width="2.05" height="2.65" fill="#84cea2"/><rect x="62.0" y="7.8" width="2.05" height="2.65" fill="#51b97c"/><rect x="62.0" y="10.4" width="2.05" height="2.65" fill="#2ea35e"/><rect x="62.0" y="13.0" width="2.05" height="2.65" fill="#25834b"/><rect x="62.0" y="15.6" width="2.05" height="2.65" fill="#195a34"/><rect x="62.0" y="18.2" width="2.05" height="2.65" fill="#0c2d1a"/><rect x="62.0" y="20.8" width="2.05" height="2.65" fill="#041109"/><rect x="64.0" y="0.0" width="2.05" height="2.65" fill="#e1f3ea"/><rect x="64.0" y="2.6" width="2.05" height="2.65" fill="#b3e0c8"/><rect x="64.0" y="5.2" width="2.05" height="2.65" fill="#82cda5"/><rect x="64.0" y="7.8" width="2.05" height="2.65" fill="#4eb880"/><rect x="64.0" y="10.4" width="2.05" height="2.65" fill="#2ba163"/><rect x="64.0" y="13.0" width="2.05" height="2.65" fill="#22814f"/><rect x="64.0" y="15.6" width="2.05" height="2.65" fill="#185a37"/><rect x="64.0" y="18.2" width="2.05" height="2.65" fill="#0c2d1b"/><rect x="64.0" y="20.8" width="2.05" height="2.65" fill="#04110a"/><rect x="66.0" y="0.0" width="2.05" height="2.65" fill="#e1f3eb"/><rect x="66.0" y="2.6" width="2.05" height="2.65" fill="#b2e0cb"/><rect x="66.0" y="5.2" width="2.05" height="2.65" fill="#81cca9"/><rect x="66.0" y="7.8" width="2.05" height="2.65" fill="#4cb785"/><rect x="66.0" y="10.4" width="2.05" height="2.65" fill="#29a169"/><rect x="66.0" y="13.0" width="2.05" height="2.65" fill="#218154"/><rect x="66.0" y="15.6" width="2.05" height="2.65" fill="#16593a"/><rect x="66.0" y="18.2" width="2.05" height="2.65" fill="#0b2c1d"/><rect x="66.0" y="20.8" width="2.05" height="2.65" fill="#04110b"/><rect x="68.0" y="0.0" width="2.05" height="2.65" fill="#e2f3ed"/><rect x="68.0" y="2.6" width="2.05" height="2.65" fill="#b5e2d1"/><rect x="68.0" y="5.2" width="2.05" height="2.65" fill="#86d0b4"/><rect x="68.0" y="7.8" width="2.05" height="2.65" fill="#54bc95"/><rect x="68.0" y="10.4" width="2.05" height="2.65" fill="#30a67a"/><rect x="68.0" y="13.0" width="2.05" height="2.65" fill="#268562"/><rect x="68.0" y="15.6" width="2.05" height="2.65" fill="#1a5c44"/><rect x="68.0" y="18.2" width="2.05" height="2.65" fill="#0d2e22"/><rect x="68.0" y="20.8" width="2.05" height="2.65" fill="#05110c"/><rect x="70.0" y="0.0" width="2.05" height="2.65" fill="#e3f4f0"/><rect x="70.0" y="2.6" width="2.05" height="2.65" fill="#b8e4d8"/><rect x="70.0" y="5.2" width="2.05" height="2.65" fill="#8cd3bf"/><rect x="70.0" y="7.8" width="2.05" height="2.65" fill="#5cc1a4"/><rect x="70.0" y="10.4" width="2.05" height="2.65" fill="#36ac8b"/><rect x="70.0" y="13.0" width="2.05" height="2.65" fill="#2c8a70"/><rect x="70.0" y="15.6" width="2.05" height="2.65" fill="#1e604d"/><rect x="70.0" y="18.2" width="2.05" height="2.65" fill="#0f2f26"/><rect x="70.0" y="20.8" width="2.05" height="2.65" fill="#05120e"/><rect x="72.0" y="0.0" width="2.05" height="2.65" fill="#e5f5f2"/><rect x="72.0" y="2.6" width="2.05" height="2.65" fill="#bbe6de"/><rect x="72.0" y="5.2" width="2.05" height="2.65" fill="#91d6c9"/><rect x="72.0" y="7.8" width="2.05" height="2.65" fill="#63c5b3"/><rect x="72.0" y="10.4" width="2.05" height="2.65" fill="#3db19c"/><rect x="72.0" y="13.0" width="2.05" height="2.65" fill="#318f7e"/><rect x="72.0" y="15.6" width="2.05" height="2.65" fill="#226357"/><rect x="72.0" y="18.2" width="2.05" height="2.65" fill="#11312b"/><rect x="72.0" y="20.8" width="2.05" height="2.65" fill="#061210"/><rect x="74.0" y="0.0" width="2.05" height="2.65" fill="#e6f6f4"/><rect x="74.0" y="2.6" width="2.05" height="2.65" fill="#bfe8e4"/><rect x="74.0" y="5.2" width="2.05" height="2.65" fill="#96d9d4"/><rect x="74.0" y="7.8" width="2.05" height="2.65" fill="#6acac2"/><rect x="74.0" y="10.4" width="2.05" height="2.65" fill="#45b7ae"/><rect x="74.0" y="13.0" width="2.05" height="2.65" fill="#37948c"/><rect x="74.0" y="15.6" width="2.05" height="2.65" fill="#266761"/><rect x="74.0" y="18.2" width="2.05" height="2.65" fill="#133330"/><rect x="74.0" y="20.8" width="2.05" height="2.65" fill="#071211"/><rect x="76.0" y="0.0" width="2.05" height="2.65" fill="#e7f6f7"/><rect x="76.0" y="2.6" width="2.05" height="2.65" fill="#c2eaeb"/><rect x="76.0" y="5.2" width="2.05" height="2.65" fill="#9bdcde"/><rect x="76.0" y="7.8" width="2.05" height="2.65" fill="#72ced0"/><rect x="76.0" y="10.4" width="2.05" height="2.65" fill="#4cbdbf"/><rect x="76.0" y="13.0" width="2.05" height="2.65" fill="#3d999b"/><rect x="76.0" y="15.6" width="2.05" height="2.65" fill="#2a6a6c"/><rect x="76.0" y="18.2" width="2.05" height="2.65" fill="#153435"/><rect x="76.0" y="20.8" width="2.05" height="2.65" fill="#071313"/><rect x="78.0" y="0.0" width="2.05" height="2.65" fill="#e5f5f8"/><rect x="78.0" y="2.6" width="2.05" height="2.65" fill="#bde7ee"/><rect x="78.0" y="5.2" width="2.05" height="2.65" fill="#94d8e3"/><rect x="78.0" y="7.8" width="2.05" height="2.65" fill="#68c8d8"/><rect x="78.0" y="10.4" width="2.05" height="2.65" fill="#41b5c8"/><rect x="78.0" y="13.0" width="2.05" height="2.65" fill="#3493a2"/><rect x="78.0" y="15.6" width="2.05" height="2.65" fill="#246670"/><rect x="78.0" y="18.2" width="2.05" height="2.65" fill="#123237"/><rect x="78.0" y="20.8" width="2.05" height="2.65" fill="#061214"/><rect x="80.0" y="0.0" width="2.05" height="2.65" fill="#e3f4f9"/><rect x="80.0" y="2.6" width="2.05" height="2.65" fill="#b8e4f1"/><rect x="80.0" y="5.2" width="2.05" height="2.65" fill="#8bd3e8"/><rect x="80.0" y="7.8" width="2.05" height="2.65" fill="#5bc1df"/><rect x="80.0" y="10.4" width="2.05" height="2.65" fill="#34acd0"/><rect x="80.0" y="13.0" width="2.05" height="2.65" fill="#2a8ba7"/><rect x="80.0" y="15.6" width="2.05" height="2.65" fill="#1d6074"/><rect x="80.0" y="18.2" width="2.05" height="2.65" fill="#0e303a"/><rect x="80.0" y="20.8" width="2.05" height="2.65" fill="#051115"/><rect x="82.0" y="0.0" width="2.05" height="2.65" fill="#e1f3fa"/><rect x="82.0" y="2.6" width="2.05" height="2.65" fill="#b3e1f4"/><rect x="82.0" y="5.2" width="2.05" height="2.65" fill="#82ceed"/><rect x="82.0" y="7.8" width="2.05" height="2.65" fill="#4fbae6"/><rect x="82.0" y="10.4" width="2.05" height="2.65" fill="#28a4d7"/><rect x="82.0" y="13.0" width="2.05" height="2.65" fill="#2084ad"/><rect x="82.0" y="15.6" width="2.05" height="2.65" fill="#165b78"/><rect x="82.0" y="18.2" width="2.05" height="2.65" fill="#0b2d3c"/><rect x="82.0" y="20.8" width="2.05" height="2.65" fill="#041116"/><rect x="84.0" y="0.0" width="2.05" height="2.65" fill="#e1f1f9"/><rect x="84.0" y="2.6" width="2.05" height="2.65" fill="#b2dcf1"/><rect x="84.0" y="5.2" width="2.05" height="2.65" fill="#81c6e8"/><rect x="84.0" y="7.8" width="2.05" height="2.65" fill="#4caedf"/><rect x="84.0" y="10.4" width="2.05" height="2.65" fill="#2797ce"/><rect x="84.0" y="13.0" width="2.05" height="2.65" fill="#1f79a5"/><rect x="84.0" y="15.6" width="2.05" height="2.65" fill="#165472"/><rect x="84.0" y="18.2" width="2.05" height="2.65" fill="#0b2a39"/><rect x="84.0" y="20.8" width="2.05" height="2.65" fill="#040f15"/><rect x="86.0" y="0.0" width="2.05" height="2.65" fill="#e1eff8"/><rect x="86.0" y="2.6" width="2.05" height="2.65" fill="#b1d7ed"/><rect x="86.0" y="5.2" width="2.05" height="2.65" fill="#80bde2"/><rect x="86.0" y="7.8" width="2.05" height="2.65" fill="#4aa2d6"/><rect x="86.0" y="10.4" width="2.05" height="2.65" fill="#2889c3"/><rect x="86.0" y="13.0" width="2.05" height="2.65" fill="#206e9d"/><rect x="86.0" y="15.6" width="2.05" height="2.65" fill="#164c6c"/><rect x="86.0" y="18.2" width="2.05" height="2.65" fill="#0b2636"/><rect x="86.0" y="20.8" width="2.05" height="2.65" fill="#040e14"/><rect x="88.0" y="0.0" width="2.05" height="2.65" fill="#e1edf7"/><rect x="88.0" y="2.6" width="2.05" height="2.65" fill="#b1d2ea"/><rect x="88.0" y="5.2" width="2.05" height="2.65" fill="#7fb5dc"/><rect x="88.0" y="7.8" width="2.05" height="2.65" fill="#4896ce"/><rect x="88.0" y="10.4" width="2.05" height="2.65" fill="#287cb9"/><rect x="88.0" y="13.0" width="2.05" height="2.65" fill="#206394"/><rect x="88.0" y="15.6" width="2.05" height="2.65" fill="#164566"/><rect x="88.0" y="18.2" width="2.05" height="2.65" fill="#0b2233"/><rect x="88.0" y="20.8" width="2.05" height="2.65" fill="#040d13"/><rect x="90.0" y="0.0" width="2.05" height="2.65" fill="#e1ebf5"/><rect x="90.0" y="2.6" width="2.05" height="2.65" fill="#b0cce6"/><rect x="90.0" y="5.2" width="2.05" height="2.65" fill="#7dacd6"/><rect x="90.0" y="7.8" width="2.05" height="2.65" fill="#4789c5"/><rect x="90.0" y="10.4" width="2.05" height="2.65" fill="#296faf"/><rect x="90.0" y="13.0" width="2.05" height="2.65" fill="#21598c"/><rect x="90.0" y="15.6" width="2.05" height="2.65" fill="#173d61"/><rect x="90.0" y="18.2" width="2.05" height="2.65" fill="#0b1f30"/><rect x="90.0" y="20.8" width="2.05" height="2.65" fill="#040c12"/><rect x="92.0" y="0.0" width="2.05" height="2.65" fill="#e0e9f4"/><rect x="92.0" y="2.6" width="2.05" height="2.65" fill="#afc7e2"/><rect x="92.0" y="5.2" width="2.05" height="2.65" fill="#7ca3d0"/><rect x="92.0" y="7.8" width="2.05" height="2.65" fill="#457bbc"/><rect x="92.0" y="10.4" width="2.05" height="2.65" fill="#2a63a5"/><rect x="92.0" y="13.0" width="2.05" height="2.65" fill="#214f83"/><rect x="92.0" y="15.6" width="2.05" height="2.65" fill="#17365b"/><rect x="92.0" y="18.2" width="2.05" height="2.65" fill="#0b1b2e"/><rect x="92.0" y="20.8" width="2.05" height="2.65" fill="#040a11"/><rect x="94.0" y="0.0" width="2.05" height="2.65" fill="#e0e7f2"/><rect x="94.0" y="2.6" width="2.05" height="2.65" fill="#aec1df"/><rect x="94.0" y="5.2" width="2.05" height="2.65" fill="#7b9aca"/><rect x="94.0" y="7.8" width="2.05" height="2.65" fill="#426eb4"/><rect x="94.0" y="10.4" width="2.05" height="2.65" fill="#2a569d"/><rect x="94.0" y="13.0" width="2.05" height="2.65" fill="#21457d"/><rect x="94.0" y="15.6" width="2.05" height="2.65" fill="#172f56"/><rect x="94.0" y="18.2" width="2.05" height="2.65" fill="#0b182b"/><rect x="94.0" y="20.8" width="2.05" height="2.65" fill="#040911"/><rect x="96.0" y="0.0" width="2.05" height="2.65" fill="#e0e5f1"/><rect x="96.0" y="2.6" width="2.05" height="2.65" fill="#adbcdc"/><rect x="96.0" y="5.2" width="2.05" height="2.65" fill="#7990c5"/><rect x="96.0" y="7.8" width="2.05" height="2.65" fill="#3f61ac"/><rect x="96.0" y="10.4" width="2.05" height="2.65" fill="#294b95"/><rect x="96.0" y="13.0" width="2.05" height="2.65" fill="#213b77"/><rect x="96.0" y="15.6" width="2.05" height="2.65" fill="#172952"/><rect x="96.0" y="18.2" width="2.05" height="2.65" fill="#0b1429"/><rect x="96.0" y="20.8" width="2.05" height="2.65" fill="#040810"/><rect x="98.0" y="0.0" width="2.05" height="2.65" fill="#dfe3f0"/><rect x="98.0" y="2.6" width="2.05" height="2.65" fill="#acb6d8"/><rect x="98.0" y="5.2" width="2.05" height="2.65" fill="#7787c0"/><rect x="98.0" y="7.8" width="2.05" height="2.65" fill="#3c53a4"/><rect x="98.0" y="10.4" width="2.05" height="2.65" fill="#293f8e"/><rect x="98.0" y="13.0" width="2.05" height="2.65" fill="#203271"/><rect x="98.0" y="15.6" width="2.05" height="2.65" fill="#16224e"/><rect x="98.0" y="18.2" width="2.05" height="2.65" fill="#0b1127"/><rect x="98.0" y="20.8" width="2.05" height="2.65" fill="#04070f"/><rect x="100.0" y="0.0" width="2.05" height="2.65" fill="#dfe1ef"/><rect x="100.0" y="2.6" width="2.05" height="2.65" fill="#abb0d5"/><rect x="100.0" y="5.2" width="2.05" height="2.65" fill="#757dba"/><rect x="100.0" y="7.8" width="2.05" height="2.65" fill="#38449c"/><rect x="100.0" y="10.4" width="2.05" height="2.65" fill="#293387"/><rect x="100.0" y="13.0" width="2.05" height="2.65" fill="#20296b"/><rect x="100.0" y="15.6" width="2.05" height="2.65" fill="#161c4a"/><rect x="100.0" y="18.2" width="2.05" height="2.65" fill="#0b0e25"/><rect x="100.0" y="20.8" width="2.05" height="2.65" fill="#04050f"/><rect x="102.0" y="0.0" width="2.05" height="2.65" fill="#dfdfee"/><rect x="102.0" y="2.6" width="2.05" height="2.65" fill="#acacd3"/><rect x="102.0" y="5.2" width="2.05" height="2.65" fill="#7676b6"/><rect x="102.0" y="7.8" width="2.05" height="2.65" fill="#393a97"/><rect x="102.0" y="10.4" width="2.05" height="2.65" fill="#2b2c82"/><rect x="102.0" y="13.0" width="2.05" height="2.65" fill="#222267"/><rect x="102.0" y="15.6" width="2.05" height="2.65" fill="#171847"/><rect x="102.0" y="18.2" width="2.05" height="2.65" fill="#0c0c24"/><rect x="102.0" y="20.8" width="2.05" height="2.65" fill="#04040e"/><rect x="104.0" y="0.0" width="2.05" height="2.65" fill="#e1e0ee"/><rect x="104.0" y="2.6" width="2.05" height="2.65" fill="#b0add4"/><rect x="104.0" y="5.2" width="2.05" height="2.65" fill="#7d78b8"/><rect x="104.0" y="7.8" width="2.05" height="2.65" fill="#443e99"/><rect x="104.0" y="10.4" width="2.05" height="2.65" fill="#342e83"/><rect x="104.0" y="13.0" width="2.05" height="2.65" fill="#292468"/><rect x="104.0" y="15.6" width="2.05" height="2.65" fill="#1c1948"/><rect x="104.0" y="18.2" width="2.05" height="2.65" fill="#0e0c24"/><rect x="104.0" y="20.8" width="2.05" height="2.65" fill="#05050e"/><rect x="106.0" y="0.0" width="2.05" height="2.65" fill="#e3e0ef"/><rect x="106.0" y="2.6" width="2.05" height="2.65" fill="#b5afd5"/><rect x="106.0" y="5.2" width="2.05" height="2.65" fill="#857bb9"/><rect x="106.0" y="7.8" width="2.05" height="2.65" fill="#50419b"/><rect x="106.0" y="10.4" width="2.05" height="2.65" fill="#3d3085"/><rect x="106.0" y="13.0" width="2.05" height="2.65" fill="#31266a"/><rect x="106.0" y="15.6" width="2.05" height="2.65" fill="#221a49"/><rect x="106.0" y="18.2" width="2.05" height="2.65" fill="#110d25"/><rect x="106.0" y="20.8" width="2.05" height="2.65" fill="#06050e"/><rect x="108.0" y="0.0" width="2.05" height="2.65" fill="#e4e1ef"/><rect x="108.0" y="2.6" width="2.05" height="2.65" fill="#b9b0d5"/><rect x="108.0" y="5.2" width="2.05" height="2.65" fill="#8c7dbb"/><rect x="108.0" y="7.8" width="2.05" height="2.65" fill="#5b459d"/><rect x="108.0" y="10.4" width="2.05" height="2.65" fill="#473287"/><rect x="108.0" y="13.0" width="2.05" height="2.65" fill="#38276b"/><rect x="108.0" y="15.6" width="2.05" height="2.65" fill="#271b4a"/><rect x="108.0" y="18.2" width="2.05" height="2.65" fill="#130d25"/><rect x="108.0" y="20.8" width="2.05" height="2.65" fill="#07050f"/><rect x="110.0" y="0.0" width="2.05" height="2.65" fill="#e6e1ef"/><rect x="110.0" y="2.6" width="2.05" height="2.65" fill="#beb1d6"/><rect x="110.0" y="5.2" width="2.05" height="2.65" fill="#947fbc"/><rect x="110.0" y="7.8" width="2.05" height="2.65" fill="#65489f"/><rect x="110.0" y="10.4" width="2.05" height="2.65" fill="#503489"/><rect x="110.0" y="13.0" width="2.05" height="2.65" fill="#40296d"/><rect x="110.0" y="15.6" width="2.05" height="2.65" fill="#2c1c4b"/><rect x="110.0" y="18.2" width="2.05" height="2.65" fill="#160e26"/><rect x="110.0" y="20.8" width="2.05" height="2.65" fill="#08050f"/><rect x="112.0" y="0.0" width="2.05" height="2.65" fill="#e8e2f0"/><rect x="112.0" y="2.6" width="2.05" height="2.65" fill="#c2b3d7"/><rect x="112.0" y="5.2" width="2.05" height="2.65" fill="#9b82bd"/><rect x="112.0" y="7.8" width="2.05" height="2.65" fill="#704ca1"/><rect x="112.0" y="10.4" width="2.05" height="2.65" fill="#5a368a"/><rect x="112.0" y="13.0" width="2.05" height="2.65" fill="#472b6e"/><rect x="112.0" y="15.6" width="2.05" height="2.65" fill="#311d4c"/><rect x="112.0" y="18.2" width="2.05" height="2.65" fill="#190f26"/><rect x="112.0" y="20.8" width="2.05" height="2.65" fill="#09050f"/><rect x="114.0" y="0.0" width="2.05" height="2.65" fill="#e9e2f0"/><rect x="114.0" y="2.6" width="2.05" height="2.65" fill="#c7b4d8"/><rect x="114.0" y="5.2" width="2.05" height="2.65" fill="#a283be"/><rect x="114.0" y="7.8" width="2.05" height="2.65" fill="#7b4ea3"/><rect x="114.0" y="10.4" width="2.05" height="2.65" fill="#64378c"/><rect x="114.0" y="13.0" width="2.05" height="2.65" fill="#4f2c6f"/><rect x="114.0" y="15.6" width="2.05" height="2.65" fill="#371e4d"/><rect x="114.0" y="18.2" width="2.05" height="2.65" fill="#1b0f27"/><rect x="114.0" y="20.8" width="2.05" height="2.65" fill="#0a060f"/><rect x="116.0" y="0.0" width="2.05" height="2.65" fill="#ebe2f0"/><rect x="116.0" y="2.6" width="2.05" height="2.65" fill="#ccb4d8"/><rect x="116.0" y="5.2" width="2.05" height="2.65" fill="#ab84be"/><rect x="116.0" y="7.8" width="2.05" height="2.65" fill="#874fa3"/><rect x="116.0" y="10.4" width="2.05" height="2.65" fill="#6f378c"/><rect x="116.0" y="13.0" width="2.05" height="2.65" fill="#582b6f"/><rect x="116.0" y="15.6" width="2.05" height="2.65" fill="#3d1e4d"/><rect x="116.0" y="18.2" width="2.05" height="2.65" fill="#1f0f27"/><rect x="116.0" y="20.8" width="2.05" height="2.65" fill="#0c060f"/><rect x="118.0" y="0.0" width="2.05" height="2.65" fill="#ede2f0"/><rect x="118.0" y="2.6" width="2.05" height="2.65" fill="#d0b4d8"/><rect x="118.0" y="5.2" width="2.05" height="2.65" fill="#b384be"/><rect x="118.0" y="7.8" width="2.05" height="2.65" fill="#9250a3"/><rect x="118.0" y="10.4" width="2.05" height="2.65" fill="#7b368c"/><rect x="118.0" y="13.0" width="2.05" height="2.65" fill="#622b6f"/><rect x="118.0" y="15.6" width="2.05" height="2.65" fill="#431e4d"/><rect x="118.0" y="18.2" width="2.05" height="2.65" fill="#220f26"/><rect x="118.0" y="20.8" width="2.05" height="2.65" fill="#0d050f"/><rect x="120.0" y="0.0" width="2.05" height="2.65" fill="#efe2f0"/><rect x="120.0" y="2.6" width="2.05" height="2.65" fill="#d5b4d8"/><rect x="120.0" y="5.2" width="2.05" height="2.65" fill="#bb84be"/><rect x="120.0" y="7.8" width="2.05" height="2.65" fill="#9e50a3"/><rect x="120.0" y="10.4" width="2.05" height="2.65" fill="#86368c"/><rect x="120.0" y="13.0" width="2.05" height="2.65" fill="#6b2b6f"/><rect x="120.0" y="15.6" width="2.05" height="2.65" fill="#4a1e4d"/><rect x="120.0" y="18.2" width="2.05" height="2.65" fill="#250f26"/><rect x="120.0" y="20.8" width="2.05" height="2.65" fill="#0e050f"/><rect x="122.0" y="0.0" width="2.05" height="2.65" fill="#f1e2f0"/><rect x="122.0" y="2.6" width="2.05" height="2.65" fill="#dab5d8"/><rect x="122.0" y="5.2" width="2.05" height="2.65" fill="#c385be"/><rect x="122.0" y="7.8" width="2.05" height="2.65" fill="#a951a3"/><rect x="122.0" y="10.4" width="2.05" height="2.65" fill="#92368c"/><rect x="122.0" y="13.0" width="2.05" height="2.65" fill="#742b6f"/><rect x="122.0" y="15.6" width="2.05" height="2.65" fill="#501e4d"/><rect x="122.0" y="18.2" width="2.05" height="2.65" fill="#280f26"/><rect x="122.0" y="20.8" width="2.05" height="2.65" fill="#0f050f"/><rect x="124.0" y="0.0" width="2.05" height="2.65" fill="#f2e2f0"/><rect x="124.0" y="2.6" width="2.05" height="2.65" fill="#dfb5d8"/><rect x="124.0" y="5.2" width="2.05" height="2.65" fill="#ca85be"/><rect x="124.0" y="7.8" width="2.05" height="2.65" fill="#b451a3"/><rect x="124.0" y="10.4" width="2.05" height="2.65" fill="#9d358b"/><rect x="124.0" y="13.0" width="2.05" height="2.65" fill="#7e2b6f"/><rect x="124.0" y="15.6" width="2.05" height="2.65" fill="#571d4d"/><rect x="124.0" y="18.2" width="2.05" height="2.65" fill="#2b0f26"/><rect x="124.0" y="20.8" width="2.05" height="2.65" fill="#11050f"/><rect x="126.0" y="0.0" width="2.05" height="2.65" fill="#f4e2ef"/><rect x="126.0" y="2.6" width="2.05" height="2.65" fill="#e3b4d7"/><rect x="126.0" y="5.2" width="2.05" height="2.65" fill="#d184bd"/><rect x="126.0" y="7.8" width="2.05" height="2.65" fill="#be4fa2"/><rect x="126.0" y="10.4" width="2.05" height="2.65" fill="#a8338a"/><rect x="126.0" y="13.0" width="2.05" height="2.65" fill="#86296e"/><rect x="126.0" y="15.6" width="2.05" height="2.65" fill="#5d1c4c"/><rect x="126.0" y="18.2" width="2.05" height="2.65" fill="#2e0e26"/><rect x="126.0" y="20.8" width="2.05" height="2.65" fill="#12050e"/><rect x="128.0" y="0.0" width="2.05" height="2.65" fill="#f5e1ef"/><rect x="128.0" y="2.6" width="2.05" height="2.65" fill="#e7b1d5"/><rect x="128.0" y="5.2" width="2.05" height="2.65" fill="#d87fba"/><rect x="128.0" y="7.8" width="2.05" height="2.65" fill="#c7499d"/><rect x="128.0" y="10.4" width="2.05" height="2.65" fill="#b12d85"/><rect x="128.0" y="13.0" width="2.05" height="2.65" fill="#8d246a"/><rect x="128.0" y="15.6" width="2.05" height="2.65" fill="#621949"/><rect x="128.0" y="18.2" width="2.05" height="2.65" fill="#310c25"/><rect x="128.0" y="20.8" width="2.05" height="2.65" fill="#13040e"/><rect x="130.0" y="0.0" width="2.05" height="2.65" fill="#f7e0ee"/><rect x="130.0" y="2.6" width="2.05" height="2.65" fill="#ebafd3"/><rect x="130.0" y="5.2" width="2.05" height="2.65" fill="#de7bb7"/><rect x="130.0" y="7.8" width="2.05" height="2.65" fill="#d04398"/><rect x="130.0" y="10.4" width="2.05" height="2.65" fill="#ba2780"/><rect x="130.0" y="13.0" width="2.05" height="2.65" fill="#941f66"/><rect x="130.0" y="15.6" width="2.05" height="2.65" fill="#671547"/><rect x="130.0" y="18.2" width="2.05" height="2.65" fill="#330b23"/><rect x="130.0" y="20.8" width="2.05" height="2.65" fill="#14040d"/><rect x="132.0" y="0.0" width="2.05" height="2.65" fill="#f8dfed"/><rect x="132.0" y="2.6" width="2.05" height="2.65" fill="#eeacd1"/><rect x="132.0" y="5.2" width="2.05" height="2.65" fill="#e477b4"/><rect x="132.0" y="7.8" width="2.05" height="2.65" fill="#d83d94"/><rect x="132.0" y="10.4" width="2.05" height="2.65" fill="#c3217b"/><rect x="132.0" y="13.0" width="2.05" height="2.65" fill="#9c1a62"/><rect x="132.0" y="15.6" width="2.05" height="2.65" fill="#6c1244"/><rect x="132.0" y="18.2" width="2.05" height="2.65" fill="#360922"/><rect x="132.0" y="20.8" width="2.05" height="2.65" fill="#15030d"/><rect x="134.0" y="0.0" width="2.05" height="2.65" fill="#fadeec"/><rect x="134.0" y="2.6" width="2.05" height="2.65" fill="#f2aacf"/><rect x="134.0" y="5.2" width="2.05" height="2.65" fill="#ea73b0"/><rect x="134.0" y="7.8" width="2.05" height="2.65" fill="#e1378f"/><rect x="134.0" y="10.4" width="2.05" height="2.65" fill="#cc1b76"/><rect x="134.0" y="13.0" width="2.05" height="2.65" fill="#a3165e"/><rect x="134.0" y="15.6" width="2.05" height="2.65" fill="#710f41"/><rect x="134.0" y="18.2" width="2.05" height="2.65" fill="#380721"/><rect x="134.0" y="20.8" width="2.05" height="2.65" fill="#16030c"/><rect x="136.0" y="0.0" width="2.05" height="2.65" fill="#fbddeb"/><rect x="136.0" y="2.6" width="2.05" height="2.65" fill="#f5a8cc"/><rect x="136.0" y="5.2" width="2.05" height="2.65" fill="#ef70ac"/><rect x="136.0" y="7.8" width="2.05" height="2.65" fill="#e83389"/><rect x="136.0" y="10.4" width="2.05" height="2.65" fill="#d31770"/><rect x="136.0" y="13.0" width="2.05" height="2.65" fill="#a91259"/><rect x="136.0" y="15.6" width="2.05" height="2.65" fill="#750c3e"/><rect x="136.0" y="18.2" width="2.05" height="2.65" fill="#3a061f"/><rect x="136.0" y="20.8" width="2.05" height="2.65" fill="#17020c"/><rect x="138.0" y="0.0" width="2.05" height="2.65" fill="#fbdee9"/><rect x="138.0" y="2.6" width="2.05" height="2.65" fill="#f5a8c7"/><rect x="138.0" y="5.2" width="2.05" height="2.65" fill="#ef71a3"/><rect x="138.0" y="7.8" width="2.05" height="2.65" fill="#e9347c"/><rect x="138.0" y="10.4" width="2.05" height="2.65" fill="#d41963"/><rect x="138.0" y="13.0" width="2.05" height="2.65" fill="#a9134f"/><rect x="138.0" y="15.6" width="2.05" height="2.65" fill="#750d37"/><rect x="138.0" y="18.2" width="2.05" height="2.65" fill="#3b061b"/><rect x="138.0" y="20.8" width="2.05" height="2.65" fill="#17020a"/><rect x="140.0" y="0.0" width="2.05" height="2.65" fill="#fbdee7"/><rect x="140.0" y="2.6" width="2.05" height="2.65" fill="#f5a9c2"/><rect x="140.0" y="5.2" width="2.05" height="2.65" fill="#ef729a"/><rect x="140.0" y="7.8" width="2.05" height="2.65" fill="#e93670"/><rect x="140.0" y="10.4" width="2.05" height="2.65" fill="#d41a56"/><rect x="140.0" y="13.0" width="2.05" height="2.65" fill="#a91545"/><rect x="140.0" y="15.6" width="2.05" height="2.65" fill="#750e30"/><rect x="140.0" y="18.2" width="2.05" height="2.65" fill="#3b0718"/><rect x="140.0" y="20.8" width="2.05" height="2.65" fill="#170209"/><rect x="142.0" y="0.0" width="2.05" height="2.65" fill="#fbdee5"/><rect x="142.0" y="2.6" width="2.05" height="2.65" fill="#f5aabc"/><rect x="142.0" y="5.2" width="2.05" height="2.65" fill="#f07392"/><rect x="142.0" y="7.8" width="2.05" height="2.65" fill="#e93763"/><rect x="142.0" y="10.4" width="2.05" height="2.65" fill="#d41c49"/><rect x="142.0" y="13.0" width="2.05" height="2.65" fill="#a9163b"/><rect x="142.0" y="15.6" width="2.05" height="2.65" fill="#750f28"/><rect x="142.0" y="18.2" width="2.05" height="2.65" fill="#3b0714"/><rect x="142.0" y="20.8" width="2.05" height="2.65" fill="#170308"/><rect x="144.0" y="0.0" width="2.05" height="2.65" fill="#fbdee3"/><rect x="144.0" y="2.6" width="2.05" height="2.65" fill="#f6aab7"/><rect x="144.0" y="5.2" width="2.05" height="2.65" fill="#f07489"/><rect x="144.0" y="7.8" width="2.05" height="2.65" fill="#e93957"/><rect x="144.0" y="10.4" width="2.05" height="2.65" fill="#d41e3d"/><rect x="144.0" y="13.0" width="2.05" height="2.65" fill="#a91830"/><rect x="144.0" y="15.6" width="2.05" height="2.65" fill="#751021"/><rect x="144.0" y="18.2" width="2.05" height="2.65" fill="#3b0811"/><rect x="144.0" y="20.8" width="2.05" height="2.65" fill="#170306"/><rect x="146.0" y="0.0" width="2.05" height="2.65" fill="#fbdfe1"/><rect x="146.0" y="2.6" width="2.05" height="2.65" fill="#f6abb2"/><rect x="146.0" y="5.2" width="2.05" height="2.65" fill="#f07580"/><rect x="146.0" y="7.8" width="2.05" height="2.65" fill="#ea3a4a"/><rect x="146.0" y="10.4" width="2.05" height="2.65" fill="#d51f30"/><rect x="146.0" y="13.0" width="2.05" height="2.65" fill="#a91926"/><rect x="146.0" y="15.6" width="2.05" height="2.65" fill="#75111a"/><rect x="146.0" y="18.2" width="2.05" height="2.65" fill="#3b080d"/><rect x="146.0" y="20.8" width="2.05" height="2.65" fill="#170305"/><rect x="148.0" y="0.0" width="2.05" height="2.65" fill="#fbdfe0"/><rect x="148.0" y="2.6" width="2.05" height="2.65" fill="#f6abae"/><rect x="148.0" y="5.2" width="2.05" height="2.65" fill="#f07679"/><rect x="148.0" y="7.8" width="2.05" height="2.65" fill="#ea3b40"/><rect x="148.0" y="10.4" width="2.05" height="2.65" fill="#d52126"/><rect x="148.0" y="13.0" width="2.05" height="2.65" fill="#aa1a1e"/><rect x="148.0" y="15.6" width="2.05" height="2.65" fill="#751215"/><rect x="148.0" y="18.2" width="2.05" height="2.65" fill="#3b090a"/><rect x="148.0" y="20.8" width="2.05" height="2.65" fill="#170304"/><rect x="0.5" y="0.5" width="147.5" height="20" fill="none" stroke="#2a2a2a" stroke-width="1"/></svg>
<div class="a" style="left:665px;top:118px;width:164px;height:5.5px;background:#4a4a4a;border-top:1px solid #3e3e3e"></div>
<div class="a" style="left:740px;top:119.5px;width:13px;height:2.5px;background:repeating-linear-gradient(to right,#3a3a3a 0 1.6px,transparent 1.6px 2.6px)"></div>
</body></html>
